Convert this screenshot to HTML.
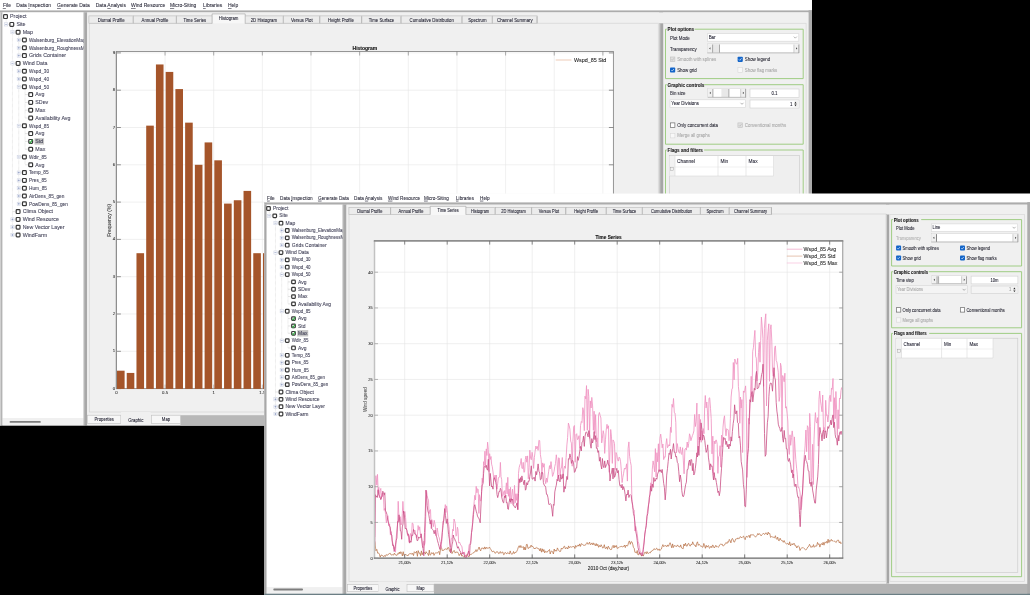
<!DOCTYPE html><html><head><meta charset="utf-8"><style>html,body{margin:0;padding:0;background:#000;width:1030px;height:595px;overflow:hidden}svg{display:block;will-change:transform}text{font-family:"Liberation Sans",sans-serif}</style></head><body>
<svg width="1030" height="595" viewBox="0 0 1030 595">
<rect x="0.00" y="0.00" width="1030.00" height="595.00" fill="#000"/>
<g id="w1">
<rect x="0.00" y="0.00" width="812.00" height="425.50" fill="#f0f0f0"/>
<rect x="0.00" y="0.00" width="812.00" height="10.20" fill="#ffffff"/>
<text x="2.90" y="7.21" font-size="5.3" fill="#2b2b3b" stroke="#2b2b3b" stroke-width="0.08" font-weight="normal" text-anchor="start" textLength="8.06" lengthAdjust="spacingAndGlyphs"><tspan text-decoration="underline">F</tspan>ile</text>
<text x="16.30" y="7.21" font-size="5.3" fill="#2b2b3b" stroke="#2b2b3b" stroke-width="0.08" font-weight="normal" text-anchor="start" textLength="34.74" lengthAdjust="spacingAndGlyphs">Data <tspan text-decoration="underline">I</tspan>nspection</text>
<text x="57.00" y="7.21" font-size="5.3" fill="#2b2b3b" stroke="#2b2b3b" stroke-width="0.08" font-weight="normal" text-anchor="start" textLength="32.80" lengthAdjust="spacingAndGlyphs"><tspan text-decoration="underline">G</tspan>enerate Data</text>
<text x="95.70" y="7.21" font-size="5.3" fill="#2b2b3b" stroke="#2b2b3b" stroke-width="0.08" font-weight="normal" text-anchor="start" textLength="30.29" lengthAdjust="spacingAndGlyphs">Data <tspan text-decoration="underline">A</tspan>nalysis</text>
<text x="131.00" y="7.21" font-size="5.3" fill="#2b2b3b" stroke="#2b2b3b" stroke-width="0.08" font-weight="normal" text-anchor="start" textLength="34.18" lengthAdjust="spacingAndGlyphs"><tspan text-decoration="underline">W</tspan>ind Resource</text>
<text x="170.00" y="7.21" font-size="5.3" fill="#2b2b3b" stroke="#2b2b3b" stroke-width="0.08" font-weight="normal" text-anchor="start" textLength="26.39" lengthAdjust="spacingAndGlyphs"><tspan text-decoration="underline">M</tspan>icro-Siting</text>
<text x="203.00" y="7.21" font-size="5.3" fill="#2b2b3b" stroke="#2b2b3b" stroke-width="0.08" font-weight="normal" text-anchor="start" textLength="19.17" lengthAdjust="spacingAndGlyphs"><tspan text-decoration="underline">L</tspan>ibraries</text>
<text x="228.00" y="7.21" font-size="5.3" fill="#2b2b3b" stroke="#2b2b3b" stroke-width="0.08" font-weight="normal" text-anchor="start" textLength="10.28" lengthAdjust="spacingAndGlyphs"><tspan text-decoration="underline">H</tspan>elp</text>
<rect x="0.00" y="10.20" width="812.00" height="2.20" fill="#acacac"/>
<rect x="0.00" y="10.20" width="812.00" height="0.80" fill="#d4d4d4"/>
<rect x="0.00" y="12.40" width="2.60" height="413.00" fill="#b4b4b4"/>
<rect x="0.00" y="12.40" width="1.00" height="413.00" fill="#d0d0d0"/>
<rect x="2.60" y="12.40" width="81.10" height="405.60" fill="#ffffff"/>
<rect x="2.60" y="418.00" width="81.10" height="7.40" fill="#f0f0f0"/>
<rect x="9.60" y="420.90" width="31.20" height="1.90" fill="#7d7d7d" rx="0.9"/>
<svg x="0" y="0" width="83.7" height="418" overflow="hidden">
<line x1="6.15" y1="19.40" x2="6.15" y2="24.40" stroke="#c4c4c4" stroke-width="0.5" stroke-dasharray="0.6,0.6"/>
<line x1="7.75" y1="24.40" x2="9.00" y2="24.40" stroke="#c8c8c8" stroke-width="0.5"/>
<line x1="12.45" y1="27.20" x2="12.45" y2="235.00" stroke="#c4c4c4" stroke-width="0.5" stroke-dasharray="0.6,0.6"/>
<line x1="14.05" y1="32.20" x2="15.30" y2="32.20" stroke="#c8c8c8" stroke-width="0.5"/>
<line x1="18.75" y1="35.00" x2="18.75" y2="55.60" stroke="#c4c4c4" stroke-width="0.5" stroke-dasharray="0.6,0.6"/>
<line x1="20.35" y1="40.00" x2="21.60" y2="40.00" stroke="#c8c8c8" stroke-width="0.5"/>
<line x1="20.35" y1="47.80" x2="21.60" y2="47.80" stroke="#c8c8c8" stroke-width="0.5"/>
<line x1="20.35" y1="55.60" x2="21.60" y2="55.60" stroke="#c8c8c8" stroke-width="0.5"/>
<line x1="14.05" y1="63.40" x2="15.30" y2="63.40" stroke="#c8c8c8" stroke-width="0.5"/>
<line x1="18.75" y1="66.20" x2="18.75" y2="203.80" stroke="#c4c4c4" stroke-width="0.5" stroke-dasharray="0.6,0.6"/>
<line x1="20.35" y1="71.20" x2="21.60" y2="71.20" stroke="#c8c8c8" stroke-width="0.5"/>
<line x1="20.35" y1="79.00" x2="21.60" y2="79.00" stroke="#c8c8c8" stroke-width="0.5"/>
<line x1="20.35" y1="86.80" x2="21.60" y2="86.80" stroke="#c8c8c8" stroke-width="0.5"/>
<line x1="25.05" y1="89.60" x2="25.05" y2="118.00" stroke="#c4c4c4" stroke-width="0.5" stroke-dasharray="0.6,0.6"/>
<line x1="25.05" y1="94.60" x2="27.90" y2="94.60" stroke="#c8c8c8" stroke-width="0.5"/>
<line x1="25.05" y1="102.40" x2="27.90" y2="102.40" stroke="#c8c8c8" stroke-width="0.5"/>
<line x1="25.05" y1="110.20" x2="27.90" y2="110.20" stroke="#c8c8c8" stroke-width="0.5"/>
<line x1="25.05" y1="118.00" x2="27.90" y2="118.00" stroke="#c8c8c8" stroke-width="0.5"/>
<line x1="20.35" y1="125.80" x2="21.60" y2="125.80" stroke="#c8c8c8" stroke-width="0.5"/>
<line x1="25.05" y1="128.60" x2="25.05" y2="149.20" stroke="#c4c4c4" stroke-width="0.5" stroke-dasharray="0.6,0.6"/>
<line x1="25.05" y1="133.60" x2="27.90" y2="133.60" stroke="#c8c8c8" stroke-width="0.5"/>
<line x1="25.05" y1="141.40" x2="27.90" y2="141.40" stroke="#c8c8c8" stroke-width="0.5"/>
<line x1="25.05" y1="149.20" x2="27.90" y2="149.20" stroke="#c8c8c8" stroke-width="0.5"/>
<line x1="20.35" y1="157.00" x2="21.60" y2="157.00" stroke="#c8c8c8" stroke-width="0.5"/>
<line x1="25.05" y1="159.80" x2="25.05" y2="164.80" stroke="#c4c4c4" stroke-width="0.5" stroke-dasharray="0.6,0.6"/>
<line x1="25.05" y1="164.80" x2="27.90" y2="164.80" stroke="#c8c8c8" stroke-width="0.5"/>
<line x1="20.35" y1="172.60" x2="21.60" y2="172.60" stroke="#c8c8c8" stroke-width="0.5"/>
<line x1="20.35" y1="180.40" x2="21.60" y2="180.40" stroke="#c8c8c8" stroke-width="0.5"/>
<line x1="20.35" y1="188.20" x2="21.60" y2="188.20" stroke="#c8c8c8" stroke-width="0.5"/>
<line x1="20.35" y1="196.00" x2="21.60" y2="196.00" stroke="#c8c8c8" stroke-width="0.5"/>
<line x1="20.35" y1="203.80" x2="21.60" y2="203.80" stroke="#c8c8c8" stroke-width="0.5"/>
<line x1="12.45" y1="211.60" x2="15.30" y2="211.60" stroke="#c8c8c8" stroke-width="0.5"/>
<line x1="14.05" y1="219.40" x2="15.30" y2="219.40" stroke="#c8c8c8" stroke-width="0.5"/>
<line x1="14.05" y1="227.20" x2="15.30" y2="227.20" stroke="#c8c8c8" stroke-width="0.5"/>
<line x1="14.05" y1="235.00" x2="15.30" y2="235.00" stroke="#c8c8c8" stroke-width="0.5"/>
<rect x="3.60" y="14.70" width="3.80" height="3.80" fill="#fff" stroke="#383838" stroke-width="1.2" rx="0.8"/>
<text x="10.10" y="18.31" font-size="4.75" fill="#44445a" stroke="#44445a" stroke-width="0.08" font-weight="normal" text-anchor="start" textLength="16.49" lengthAdjust="spacingAndGlyphs">Project</text>
<rect x="4.55" y="22.80" width="3.20" height="3.20" fill="#fff" stroke="#c9cfe0" stroke-width="0.5"/>
<line x1="5.15" y1="24.40" x2="7.15" y2="24.40" stroke="#6c7fb0" stroke-width="0.5"/>
<rect x="9.90" y="22.50" width="3.80" height="3.80" fill="#fff" stroke="#383838" stroke-width="1.2" rx="0.8"/>
<text x="16.40" y="26.11" font-size="4.75" fill="#44445a" stroke="#44445a" stroke-width="0.08" font-weight="normal" text-anchor="start" textLength="9.13" lengthAdjust="spacingAndGlyphs">Site</text>
<rect x="10.85" y="30.60" width="3.20" height="3.20" fill="#fff" stroke="#c9cfe0" stroke-width="0.5"/>
<line x1="11.45" y1="32.20" x2="13.45" y2="32.20" stroke="#6c7fb0" stroke-width="0.5"/>
<rect x="16.20" y="30.30" width="3.80" height="3.80" fill="#fff" stroke="#383838" stroke-width="1.2" rx="0.8"/>
<text x="22.70" y="33.91" font-size="4.75" fill="#44445a" stroke="#44445a" stroke-width="0.08" font-weight="normal" text-anchor="start" textLength="10.31" lengthAdjust="spacingAndGlyphs">Map</text>
<rect x="17.15" y="38.40" width="3.20" height="3.20" fill="#fff" stroke="#c9cfe0" stroke-width="0.5"/>
<line x1="17.75" y1="40.00" x2="19.75" y2="40.00" stroke="#6c7fb0" stroke-width="0.5"/>
<line x1="18.75" y1="39.00" x2="18.75" y2="41.00" stroke="#6c7fb0" stroke-width="0.5"/>
<rect x="22.50" y="38.10" width="3.80" height="3.80" fill="#fff" stroke="#383838" stroke-width="1.2" rx="0.8"/>
<text x="29.00" y="41.71" font-size="4.75" fill="#44445a" stroke="#44445a" stroke-width="0.08" font-weight="normal" text-anchor="start" textLength="56.59" lengthAdjust="spacingAndGlyphs">Walsenburg_ElevationMap</text>
<rect x="17.15" y="46.20" width="3.20" height="3.20" fill="#fff" stroke="#c9cfe0" stroke-width="0.5"/>
<line x1="17.75" y1="47.80" x2="19.75" y2="47.80" stroke="#6c7fb0" stroke-width="0.5"/>
<line x1="18.75" y1="46.80" x2="18.75" y2="48.80" stroke="#6c7fb0" stroke-width="0.5"/>
<rect x="22.50" y="45.90" width="3.80" height="3.80" fill="#fff" stroke="#383838" stroke-width="1.2" rx="0.8"/>
<text x="29.00" y="49.51" font-size="4.75" fill="#44445a" stroke="#44445a" stroke-width="0.08" font-weight="normal" text-anchor="start" textLength="61.08" lengthAdjust="spacingAndGlyphs">Walsenburg_RoughnessMap</text>
<rect x="17.15" y="54.00" width="3.20" height="3.20" fill="#fff" stroke="#c9cfe0" stroke-width="0.5"/>
<line x1="17.75" y1="55.60" x2="19.75" y2="55.60" stroke="#6c7fb0" stroke-width="0.5"/>
<line x1="18.75" y1="54.60" x2="18.75" y2="56.60" stroke="#6c7fb0" stroke-width="0.5"/>
<rect x="22.50" y="53.70" width="3.80" height="3.80" fill="#fff" stroke="#383838" stroke-width="1.2" rx="0.8"/>
<text x="29.00" y="57.31" font-size="4.75" fill="#44445a" stroke="#44445a" stroke-width="0.08" font-weight="normal" text-anchor="start" textLength="37.11" lengthAdjust="spacingAndGlyphs">Grids Container</text>
<rect x="10.85" y="61.80" width="3.20" height="3.20" fill="#fff" stroke="#c9cfe0" stroke-width="0.5"/>
<line x1="11.45" y1="63.40" x2="13.45" y2="63.40" stroke="#6c7fb0" stroke-width="0.5"/>
<rect x="16.20" y="61.50" width="3.80" height="3.80" fill="#fff" stroke="#383838" stroke-width="1.2" rx="0.8"/>
<text x="22.70" y="65.11" font-size="4.75" fill="#44445a" stroke="#44445a" stroke-width="0.08" font-weight="normal" text-anchor="start" textLength="24.74" lengthAdjust="spacingAndGlyphs">Wind Data</text>
<rect x="17.15" y="69.60" width="3.20" height="3.20" fill="#fff" stroke="#c9cfe0" stroke-width="0.5"/>
<line x1="17.75" y1="71.20" x2="19.75" y2="71.20" stroke="#6c7fb0" stroke-width="0.5"/>
<line x1="18.75" y1="70.20" x2="18.75" y2="72.20" stroke="#6c7fb0" stroke-width="0.5"/>
<rect x="22.50" y="69.30" width="3.80" height="3.80" fill="#fff" stroke="#383838" stroke-width="1.2" rx="0.8"/>
<text x="29.00" y="72.91" font-size="4.75" fill="#44445a" stroke="#44445a" stroke-width="0.08" font-weight="normal" text-anchor="start" textLength="20.07" lengthAdjust="spacingAndGlyphs">Wspd_30</text>
<rect x="17.15" y="77.40" width="3.20" height="3.20" fill="#fff" stroke="#c9cfe0" stroke-width="0.5"/>
<line x1="17.75" y1="79.00" x2="19.75" y2="79.00" stroke="#6c7fb0" stroke-width="0.5"/>
<line x1="18.75" y1="78.00" x2="18.75" y2="80.00" stroke="#6c7fb0" stroke-width="0.5"/>
<rect x="22.50" y="77.10" width="3.80" height="3.80" fill="#fff" stroke="#383838" stroke-width="1.2" rx="0.8"/>
<text x="29.00" y="80.71" font-size="4.75" fill="#44445a" stroke="#44445a" stroke-width="0.08" font-weight="normal" text-anchor="start" textLength="20.07" lengthAdjust="spacingAndGlyphs">Wspd_40</text>
<rect x="17.15" y="85.20" width="3.20" height="3.20" fill="#fff" stroke="#c9cfe0" stroke-width="0.5"/>
<line x1="17.75" y1="86.80" x2="19.75" y2="86.80" stroke="#6c7fb0" stroke-width="0.5"/>
<rect x="22.50" y="84.90" width="3.80" height="3.80" fill="#fff" stroke="#383838" stroke-width="1.2" rx="0.8"/>
<text x="29.00" y="88.51" font-size="4.75" fill="#44445a" stroke="#44445a" stroke-width="0.08" font-weight="normal" text-anchor="start" textLength="20.07" lengthAdjust="spacingAndGlyphs">Wspd_50</text>
<rect x="28.80" y="92.70" width="3.80" height="3.80" fill="#fff" stroke="#383838" stroke-width="1.2" rx="0.8"/>
<text x="35.30" y="96.31" font-size="4.75" fill="#44445a" stroke="#44445a" stroke-width="0.08" font-weight="normal" text-anchor="start" textLength="9.04" lengthAdjust="spacingAndGlyphs">Avg</text>
<rect x="28.80" y="100.50" width="3.80" height="3.80" fill="#fff" stroke="#383838" stroke-width="1.2" rx="0.8"/>
<text x="35.30" y="104.11" font-size="4.75" fill="#44445a" stroke="#44445a" stroke-width="0.08" font-weight="normal" text-anchor="start" textLength="12.96" lengthAdjust="spacingAndGlyphs">SDev</text>
<rect x="28.80" y="108.30" width="3.80" height="3.80" fill="#fff" stroke="#383838" stroke-width="1.2" rx="0.8"/>
<text x="35.30" y="111.91" font-size="4.75" fill="#44445a" stroke="#44445a" stroke-width="0.08" font-weight="normal" text-anchor="start" textLength="10.01" lengthAdjust="spacingAndGlyphs">Max</text>
<rect x="28.80" y="116.10" width="3.80" height="3.80" fill="#fff" stroke="#383838" stroke-width="1.2" rx="0.8"/>
<text x="35.30" y="119.71" font-size="4.75" fill="#44445a" stroke="#44445a" stroke-width="0.08" font-weight="normal" text-anchor="start" textLength="35.16" lengthAdjust="spacingAndGlyphs">Availability Avg</text>
<rect x="17.15" y="124.20" width="3.20" height="3.20" fill="#fff" stroke="#c9cfe0" stroke-width="0.5"/>
<line x1="17.75" y1="125.80" x2="19.75" y2="125.80" stroke="#6c7fb0" stroke-width="0.5"/>
<rect x="22.50" y="123.90" width="3.80" height="3.80" fill="#fff" stroke="#383838" stroke-width="1.2" rx="0.8"/>
<text x="29.00" y="127.51" font-size="4.75" fill="#44445a" stroke="#44445a" stroke-width="0.08" font-weight="normal" text-anchor="start" textLength="20.07" lengthAdjust="spacingAndGlyphs">Wspd_85</text>
<rect x="28.80" y="131.70" width="3.80" height="3.80" fill="#fff" stroke="#383838" stroke-width="1.2" rx="0.8"/>
<text x="35.30" y="135.31" font-size="4.75" fill="#44445a" stroke="#44445a" stroke-width="0.08" font-weight="normal" text-anchor="start" textLength="9.04" lengthAdjust="spacingAndGlyphs">Avg</text>
<rect x="34.50" y="138.20" width="9.55" height="6.40" fill="#c6c6c6"/>
<rect x="28.80" y="139.50" width="3.80" height="3.80" fill="#fff" stroke="#383838" stroke-width="1.2" rx="0.8"/>
<path d="M29.50,141.65 L30.30,142.90 L32.45,139.65" fill="none" stroke="#35a845" stroke-width="1.1"/>
<text x="35.30" y="143.11" font-size="4.75" fill="#44445a" stroke="#44445a" stroke-width="0.08" font-weight="normal" text-anchor="start" textLength="7.95" lengthAdjust="spacingAndGlyphs">Std</text>
<rect x="28.80" y="147.30" width="3.80" height="3.80" fill="#fff" stroke="#383838" stroke-width="1.2" rx="0.8"/>
<text x="35.30" y="150.91" font-size="4.75" fill="#44445a" stroke="#44445a" stroke-width="0.08" font-weight="normal" text-anchor="start" textLength="10.01" lengthAdjust="spacingAndGlyphs">Max</text>
<rect x="17.15" y="155.40" width="3.20" height="3.20" fill="#fff" stroke="#c9cfe0" stroke-width="0.5"/>
<line x1="17.75" y1="157.00" x2="19.75" y2="157.00" stroke="#6c7fb0" stroke-width="0.5"/>
<rect x="22.50" y="155.10" width="3.80" height="3.80" fill="#fff" stroke="#383838" stroke-width="1.2" rx="0.8"/>
<text x="29.00" y="158.71" font-size="4.75" fill="#44445a" stroke="#44445a" stroke-width="0.08" font-weight="normal" text-anchor="start" textLength="17.69" lengthAdjust="spacingAndGlyphs">Wdir_85</text>
<rect x="28.80" y="162.90" width="3.80" height="3.80" fill="#fff" stroke="#383838" stroke-width="1.2" rx="0.8"/>
<text x="35.30" y="166.51" font-size="4.75" fill="#44445a" stroke="#44445a" stroke-width="0.08" font-weight="normal" text-anchor="start" textLength="9.04" lengthAdjust="spacingAndGlyphs">Avg</text>
<rect x="17.15" y="171.00" width="3.20" height="3.20" fill="#fff" stroke="#c9cfe0" stroke-width="0.5"/>
<line x1="17.75" y1="172.60" x2="19.75" y2="172.60" stroke="#6c7fb0" stroke-width="0.5"/>
<line x1="18.75" y1="171.60" x2="18.75" y2="173.60" stroke="#6c7fb0" stroke-width="0.5"/>
<rect x="22.50" y="170.70" width="3.80" height="3.80" fill="#fff" stroke="#383838" stroke-width="1.2" rx="0.8"/>
<text x="29.00" y="174.31" font-size="4.75" fill="#44445a" stroke="#44445a" stroke-width="0.08" font-weight="normal" text-anchor="start" textLength="19.54" lengthAdjust="spacingAndGlyphs">Temp_85</text>
<rect x="17.15" y="178.80" width="3.20" height="3.20" fill="#fff" stroke="#c9cfe0" stroke-width="0.5"/>
<line x1="17.75" y1="180.40" x2="19.75" y2="180.40" stroke="#6c7fb0" stroke-width="0.5"/>
<line x1="18.75" y1="179.40" x2="18.75" y2="181.40" stroke="#6c7fb0" stroke-width="0.5"/>
<rect x="22.50" y="178.50" width="3.80" height="3.80" fill="#fff" stroke="#383838" stroke-width="1.2" rx="0.8"/>
<text x="29.00" y="182.11" font-size="4.75" fill="#44445a" stroke="#44445a" stroke-width="0.08" font-weight="normal" text-anchor="start" textLength="17.69" lengthAdjust="spacingAndGlyphs">Pres_85</text>
<rect x="17.15" y="186.60" width="3.20" height="3.20" fill="#fff" stroke="#c9cfe0" stroke-width="0.5"/>
<line x1="17.75" y1="188.20" x2="19.75" y2="188.20" stroke="#6c7fb0" stroke-width="0.5"/>
<line x1="18.75" y1="187.20" x2="18.75" y2="189.20" stroke="#6c7fb0" stroke-width="0.5"/>
<rect x="22.50" y="186.30" width="3.80" height="3.80" fill="#fff" stroke="#383838" stroke-width="1.2" rx="0.8"/>
<text x="29.00" y="189.91" font-size="4.75" fill="#44445a" stroke="#44445a" stroke-width="0.08" font-weight="normal" text-anchor="start" textLength="17.95" lengthAdjust="spacingAndGlyphs">Hum_85</text>
<rect x="17.15" y="194.40" width="3.20" height="3.20" fill="#fff" stroke="#c9cfe0" stroke-width="0.5"/>
<line x1="17.75" y1="196.00" x2="19.75" y2="196.00" stroke="#6c7fb0" stroke-width="0.5"/>
<line x1="18.75" y1="195.00" x2="18.75" y2="197.00" stroke="#6c7fb0" stroke-width="0.5"/>
<rect x="22.50" y="194.10" width="3.80" height="3.80" fill="#fff" stroke="#383838" stroke-width="1.2" rx="0.8"/>
<text x="29.00" y="197.71" font-size="4.75" fill="#44445a" stroke="#44445a" stroke-width="0.08" font-weight="normal" text-anchor="start" textLength="35.38" lengthAdjust="spacingAndGlyphs">AirDens_85_gen</text>
<rect x="17.15" y="202.20" width="3.20" height="3.20" fill="#fff" stroke="#c9cfe0" stroke-width="0.5"/>
<line x1="17.75" y1="203.80" x2="19.75" y2="203.80" stroke="#6c7fb0" stroke-width="0.5"/>
<line x1="18.75" y1="202.80" x2="18.75" y2="204.80" stroke="#6c7fb0" stroke-width="0.5"/>
<rect x="22.50" y="201.90" width="3.80" height="3.80" fill="#fff" stroke="#383838" stroke-width="1.2" rx="0.8"/>
<text x="29.00" y="205.51" font-size="4.75" fill="#44445a" stroke="#44445a" stroke-width="0.08" font-weight="normal" text-anchor="start" textLength="38.82" lengthAdjust="spacingAndGlyphs">PowDens_85_gen</text>
<rect x="16.20" y="209.70" width="3.80" height="3.80" fill="#fff" stroke="#383838" stroke-width="1.2" rx="0.8"/>
<text x="22.70" y="213.31" font-size="4.75" fill="#44445a" stroke="#44445a" stroke-width="0.08" font-weight="normal" text-anchor="start" textLength="30.33" lengthAdjust="spacingAndGlyphs">Clima Object</text>
<rect x="10.85" y="217.80" width="3.20" height="3.20" fill="#fff" stroke="#c9cfe0" stroke-width="0.5"/>
<line x1="11.45" y1="219.40" x2="13.45" y2="219.40" stroke="#6c7fb0" stroke-width="0.5"/>
<line x1="12.45" y1="218.40" x2="12.45" y2="220.40" stroke="#6c7fb0" stroke-width="0.5"/>
<rect x="16.20" y="217.50" width="3.80" height="3.80" fill="#fff" stroke="#383838" stroke-width="1.2" rx="0.8"/>
<text x="22.70" y="221.11" font-size="4.75" fill="#44445a" stroke="#44445a" stroke-width="0.08" font-weight="normal" text-anchor="start" textLength="36.23" lengthAdjust="spacingAndGlyphs">Wind Resource</text>
<rect x="10.85" y="225.60" width="3.20" height="3.20" fill="#fff" stroke="#c9cfe0" stroke-width="0.5"/>
<line x1="11.45" y1="227.20" x2="13.45" y2="227.20" stroke="#6c7fb0" stroke-width="0.5"/>
<line x1="12.45" y1="226.20" x2="12.45" y2="228.20" stroke="#6c7fb0" stroke-width="0.5"/>
<rect x="16.20" y="225.30" width="3.80" height="3.80" fill="#fff" stroke="#383838" stroke-width="1.2" rx="0.8"/>
<text x="22.70" y="228.91" font-size="4.75" fill="#44445a" stroke="#44445a" stroke-width="0.08" font-weight="normal" text-anchor="start" textLength="41.83" lengthAdjust="spacingAndGlyphs">New Vector Layer</text>
<rect x="10.85" y="233.40" width="3.20" height="3.20" fill="#fff" stroke="#c9cfe0" stroke-width="0.5"/>
<line x1="11.45" y1="235.00" x2="13.45" y2="235.00" stroke="#6c7fb0" stroke-width="0.5"/>
<line x1="12.45" y1="234.00" x2="12.45" y2="236.00" stroke="#6c7fb0" stroke-width="0.5"/>
<rect x="16.20" y="233.10" width="3.80" height="3.80" fill="#fff" stroke="#383838" stroke-width="1.2" rx="0.8"/>
<text x="22.70" y="236.71" font-size="4.75" fill="#44445a" stroke="#44445a" stroke-width="0.08" font-weight="normal" text-anchor="start" textLength="24.44" lengthAdjust="spacingAndGlyphs">WindFarm</text>
</svg>
<rect x="83.70" y="12.40" width="3.50" height="413.00" fill="#a8a8a8"/>
<rect x="83.70" y="12.40" width="0.80" height="413.00" fill="#c4c4c4"/>
<rect x="87.20" y="12.40" width="571.90" height="413.00" fill="#f0f0f0"/>
<rect x="89.30" y="23.20" width="569.00" height="388.80" fill="#f0f0f0" stroke="#d4d4d4" stroke-width="0.7"/>
<rect x="88.90" y="15.90" width="44.50" height="7.30" fill="#ececec" stroke="#b9b9b9" stroke-width="0.6"/>
<line x1="133.10" y1="16.40" x2="133.10" y2="23.20" stroke="#9a9a9a" stroke-width="0.5"/>
<text x="111.15" y="21.83" font-size="4.816" fill="#1e1e2e" stroke="#1e1e2e" stroke-width="0.08" font-weight="normal" text-anchor="middle" textLength="27.00" lengthAdjust="spacingAndGlyphs">Diurnal Profile</text>
<rect x="133.40" y="15.90" width="43.20" height="7.30" fill="#ececec" stroke="#b9b9b9" stroke-width="0.6"/>
<line x1="176.30" y1="16.40" x2="176.30" y2="23.20" stroke="#9a9a9a" stroke-width="0.5"/>
<text x="155.00" y="21.83" font-size="4.816" fill="#1e1e2e" stroke="#1e1e2e" stroke-width="0.08" font-weight="normal" text-anchor="middle" textLength="26.77" lengthAdjust="spacingAndGlyphs">Annual Profile</text>
<rect x="176.60" y="15.90" width="36.50" height="7.30" fill="#ececec" stroke="#b9b9b9" stroke-width="0.6"/>
<line x1="212.80" y1="16.40" x2="212.80" y2="23.20" stroke="#9a9a9a" stroke-width="0.5"/>
<text x="194.85" y="21.83" font-size="4.816" fill="#1e1e2e" stroke="#1e1e2e" stroke-width="0.08" font-weight="normal" text-anchor="middle" textLength="22.78" lengthAdjust="spacingAndGlyphs">Time Series</text>
<rect x="244.20" y="15.90" width="39.30" height="7.30" fill="#ececec" stroke="#b9b9b9" stroke-width="0.6"/>
<line x1="283.20" y1="16.40" x2="283.20" y2="23.20" stroke="#9a9a9a" stroke-width="0.5"/>
<text x="263.85" y="21.83" font-size="4.816" fill="#1e1e2e" stroke="#1e1e2e" stroke-width="0.08" font-weight="normal" text-anchor="middle" textLength="26.28" lengthAdjust="spacingAndGlyphs">2D Histogram</text>
<rect x="283.50" y="15.90" width="36.50" height="7.30" fill="#ececec" stroke="#b9b9b9" stroke-width="0.6"/>
<line x1="319.70" y1="16.40" x2="319.70" y2="23.20" stroke="#9a9a9a" stroke-width="0.5"/>
<text x="301.75" y="21.83" font-size="4.816" fill="#1e1e2e" stroke="#1e1e2e" stroke-width="0.08" font-weight="normal" text-anchor="middle" textLength="21.75" lengthAdjust="spacingAndGlyphs">Versus Plot</text>
<rect x="320.00" y="15.90" width="41.90" height="7.30" fill="#ececec" stroke="#b9b9b9" stroke-width="0.6"/>
<line x1="361.60" y1="16.40" x2="361.60" y2="23.20" stroke="#9a9a9a" stroke-width="0.5"/>
<text x="340.95" y="21.83" font-size="4.816" fill="#1e1e2e" stroke="#1e1e2e" stroke-width="0.08" font-weight="normal" text-anchor="middle" textLength="25.81" lengthAdjust="spacingAndGlyphs">Height Profile</text>
<rect x="361.90" y="15.90" width="39.30" height="7.30" fill="#ececec" stroke="#b9b9b9" stroke-width="0.6"/>
<line x1="400.90" y1="16.40" x2="400.90" y2="23.20" stroke="#9a9a9a" stroke-width="0.5"/>
<text x="381.55" y="21.83" font-size="4.816" fill="#1e1e2e" stroke="#1e1e2e" stroke-width="0.08" font-weight="normal" text-anchor="middle" textLength="25.41" lengthAdjust="spacingAndGlyphs">Time Surface</text>
<rect x="401.20" y="15.90" width="61.00" height="7.30" fill="#ececec" stroke="#b9b9b9" stroke-width="0.6"/>
<line x1="461.90" y1="16.40" x2="461.90" y2="23.20" stroke="#9a9a9a" stroke-width="0.5"/>
<text x="431.70" y="21.83" font-size="4.816" fill="#1e1e2e" stroke="#1e1e2e" stroke-width="0.08" font-weight="normal" text-anchor="middle" textLength="44.21" lengthAdjust="spacingAndGlyphs">Cumulative Distribution</text>
<rect x="462.20" y="15.90" width="30.30" height="7.30" fill="#ececec" stroke="#b9b9b9" stroke-width="0.6"/>
<line x1="492.20" y1="16.40" x2="492.20" y2="23.20" stroke="#9a9a9a" stroke-width="0.5"/>
<text x="477.35" y="21.83" font-size="4.816" fill="#1e1e2e" stroke="#1e1e2e" stroke-width="0.08" font-weight="normal" text-anchor="middle" textLength="18.40" lengthAdjust="spacingAndGlyphs">Spectrum</text>
<rect x="492.50" y="15.90" width="44.70" height="7.30" fill="#ececec" stroke="#b9b9b9" stroke-width="0.6"/>
<line x1="536.90" y1="16.40" x2="536.90" y2="23.20" stroke="#9a9a9a" stroke-width="0.5"/>
<text x="514.85" y="21.83" font-size="4.816" fill="#1e1e2e" stroke="#1e1e2e" stroke-width="0.08" font-weight="normal" text-anchor="middle" textLength="35.61" lengthAdjust="spacingAndGlyphs">Channel Summary</text>
<rect x="212.10" y="13.90" width="33.10" height="9.90" fill="#f7f7f7"/>
<path d="M212.10,23.50 L212.10,13.90 L245.20,13.90 L245.20,23.50" fill="none" stroke="#a0a0a0" stroke-width="0.6"/>
<text x="228.65" y="20.23" font-size="4.816" fill="#1e1e2e" stroke="#1e1e2e" stroke-width="0.08" font-weight="normal" text-anchor="middle" textLength="19.59" lengthAdjust="spacingAndGlyphs">Histogram</text>
<rect x="180.40" y="415.20" width="478.00" height="10.20" fill="#b8b8b8"/>
<rect x="87.60" y="415.20" width="33.20" height="8.10" fill="#f7f7f7" stroke="#c0c0c0" stroke-width="0.6"/>
<text x="104.20" y="421.08" font-size="4.944999999999999" fill="#1c1c2c" stroke="#1c1c2c" stroke-width="0.08" font-weight="normal" text-anchor="middle" textLength="19.60" lengthAdjust="spacingAndGlyphs">Properties</text>
<rect x="121.00" y="412.00" width="29.60" height="12.50" fill="#f0f0f0"/>
<text x="135.80" y="422.38" font-size="4.944999999999999" fill="#1c1c2c" stroke="#1c1c2c" stroke-width="0.08" font-weight="normal" text-anchor="middle" textLength="15.06" lengthAdjust="spacingAndGlyphs">Graphic</text>
<rect x="151.60" y="415.20" width="28.80" height="8.10" fill="#f7f7f7" stroke="#c0c0c0" stroke-width="0.6"/>
<text x="166.00" y="421.08" font-size="4.944999999999999" fill="#1c1c2c" stroke="#1c1c2c" stroke-width="0.08" font-weight="normal" text-anchor="middle" textLength="8.36" lengthAdjust="spacingAndGlyphs">Map</text>
<rect x="659.10" y="23.30" width="4.00" height="402.00" fill="#a6a6a6"/>
<rect x="659.10" y="23.30" width="1.20" height="402.00" fill="#cfcfcf"/>
<rect x="663.10" y="12.40" width="145.50" height="413.00" fill="#f0f0f0"/>
<rect x="663.60" y="23.30" width="142.50" height="402.00" fill="#f0f0f0" stroke="#d8d8d8" stroke-width="0.7"/>
<rect x="808.60" y="10.20" width="3.40" height="415.30" fill="#acacac"/>
<rect x="116.40" y="51.50" width="497.00" height="337.10" fill="#ffffff"/>
<line x1="116.40" y1="351.30" x2="613.40" y2="351.30" stroke="#e6e6e6" stroke-width="0.6"/>
<line x1="116.40" y1="314.00" x2="613.40" y2="314.00" stroke="#e6e6e6" stroke-width="0.6"/>
<line x1="116.40" y1="276.70" x2="613.40" y2="276.70" stroke="#e6e6e6" stroke-width="0.6"/>
<line x1="116.40" y1="239.40" x2="613.40" y2="239.40" stroke="#e6e6e6" stroke-width="0.6"/>
<line x1="116.40" y1="202.10" x2="613.40" y2="202.10" stroke="#e6e6e6" stroke-width="0.6"/>
<line x1="116.40" y1="164.80" x2="613.40" y2="164.80" stroke="#e6e6e6" stroke-width="0.6"/>
<line x1="116.40" y1="127.50" x2="613.40" y2="127.50" stroke="#e6e6e6" stroke-width="0.6"/>
<line x1="116.40" y1="90.20" x2="613.40" y2="90.20" stroke="#e6e6e6" stroke-width="0.6"/>
<line x1="116.40" y1="52.90" x2="613.40" y2="52.90" stroke="#e6e6e6" stroke-width="0.6"/>
<line x1="165.05" y1="51.50" x2="165.05" y2="388.60" stroke="#e6e6e6" stroke-width="0.6"/>
<line x1="213.70" y1="51.50" x2="213.70" y2="388.60" stroke="#e6e6e6" stroke-width="0.6"/>
<line x1="262.35" y1="51.50" x2="262.35" y2="388.60" stroke="#e6e6e6" stroke-width="0.6"/>
<line x1="311.00" y1="51.50" x2="311.00" y2="388.60" stroke="#e6e6e6" stroke-width="0.6"/>
<line x1="359.65" y1="51.50" x2="359.65" y2="388.60" stroke="#e6e6e6" stroke-width="0.6"/>
<line x1="408.30" y1="51.50" x2="408.30" y2="388.60" stroke="#e6e6e6" stroke-width="0.6"/>
<line x1="456.95" y1="51.50" x2="456.95" y2="388.60" stroke="#e6e6e6" stroke-width="0.6"/>
<line x1="505.60" y1="51.50" x2="505.60" y2="388.60" stroke="#e6e6e6" stroke-width="0.6"/>
<line x1="554.25" y1="51.50" x2="554.25" y2="388.60" stroke="#e6e6e6" stroke-width="0.6"/>
<line x1="602.90" y1="51.50" x2="602.90" y2="388.60" stroke="#e6e6e6" stroke-width="0.6"/>
<rect x="116.4" y="51.5" width="497.0" height="337.1" fill="none" stroke="#8a8a8a" stroke-width="0.9"/>
<line x1="116.40" y1="388.60" x2="120.90" y2="388.60" stroke="#666" stroke-width="0.7"/>
<line x1="608.90" y1="388.60" x2="613.40" y2="388.60" stroke="#666" stroke-width="0.7"/>
<line x1="116.40" y1="351.30" x2="120.90" y2="351.30" stroke="#666" stroke-width="0.7"/>
<line x1="608.90" y1="351.30" x2="613.40" y2="351.30" stroke="#666" stroke-width="0.7"/>
<line x1="116.40" y1="314.00" x2="120.90" y2="314.00" stroke="#666" stroke-width="0.7"/>
<line x1="608.90" y1="314.00" x2="613.40" y2="314.00" stroke="#666" stroke-width="0.7"/>
<line x1="116.40" y1="276.70" x2="120.90" y2="276.70" stroke="#666" stroke-width="0.7"/>
<line x1="608.90" y1="276.70" x2="613.40" y2="276.70" stroke="#666" stroke-width="0.7"/>
<line x1="116.40" y1="239.40" x2="120.90" y2="239.40" stroke="#666" stroke-width="0.7"/>
<line x1="608.90" y1="239.40" x2="613.40" y2="239.40" stroke="#666" stroke-width="0.7"/>
<line x1="116.40" y1="202.10" x2="120.90" y2="202.10" stroke="#666" stroke-width="0.7"/>
<line x1="608.90" y1="202.10" x2="613.40" y2="202.10" stroke="#666" stroke-width="0.7"/>
<line x1="116.40" y1="164.80" x2="120.90" y2="164.80" stroke="#666" stroke-width="0.7"/>
<line x1="608.90" y1="164.80" x2="613.40" y2="164.80" stroke="#666" stroke-width="0.7"/>
<line x1="116.40" y1="127.50" x2="120.90" y2="127.50" stroke="#666" stroke-width="0.7"/>
<line x1="608.90" y1="127.50" x2="613.40" y2="127.50" stroke="#666" stroke-width="0.7"/>
<line x1="116.40" y1="90.20" x2="120.90" y2="90.20" stroke="#666" stroke-width="0.7"/>
<line x1="608.90" y1="90.20" x2="613.40" y2="90.20" stroke="#666" stroke-width="0.7"/>
<line x1="116.40" y1="52.90" x2="120.90" y2="52.90" stroke="#666" stroke-width="0.7"/>
<line x1="608.90" y1="52.90" x2="613.40" y2="52.90" stroke="#666" stroke-width="0.7"/>
<line x1="116.40" y1="388.60" x2="116.40" y2="384.60" stroke="#9a9a9a" stroke-width="0.6"/>
<line x1="116.40" y1="51.50" x2="116.40" y2="55.50" stroke="#777" stroke-width="0.6"/>
<line x1="165.05" y1="388.60" x2="165.05" y2="384.60" stroke="#9a9a9a" stroke-width="0.6"/>
<line x1="165.05" y1="51.50" x2="165.05" y2="55.50" stroke="#777" stroke-width="0.6"/>
<line x1="213.70" y1="388.60" x2="213.70" y2="384.60" stroke="#9a9a9a" stroke-width="0.6"/>
<line x1="213.70" y1="51.50" x2="213.70" y2="55.50" stroke="#777" stroke-width="0.6"/>
<line x1="262.35" y1="388.60" x2="262.35" y2="384.60" stroke="#9a9a9a" stroke-width="0.6"/>
<line x1="262.35" y1="51.50" x2="262.35" y2="55.50" stroke="#777" stroke-width="0.6"/>
<line x1="311.00" y1="388.60" x2="311.00" y2="384.60" stroke="#9a9a9a" stroke-width="0.6"/>
<line x1="311.00" y1="51.50" x2="311.00" y2="55.50" stroke="#777" stroke-width="0.6"/>
<line x1="359.65" y1="388.60" x2="359.65" y2="384.60" stroke="#9a9a9a" stroke-width="0.6"/>
<line x1="359.65" y1="51.50" x2="359.65" y2="55.50" stroke="#777" stroke-width="0.6"/>
<line x1="408.30" y1="388.60" x2="408.30" y2="384.60" stroke="#9a9a9a" stroke-width="0.6"/>
<line x1="408.30" y1="51.50" x2="408.30" y2="55.50" stroke="#777" stroke-width="0.6"/>
<line x1="456.95" y1="388.60" x2="456.95" y2="384.60" stroke="#9a9a9a" stroke-width="0.6"/>
<line x1="456.95" y1="51.50" x2="456.95" y2="55.50" stroke="#777" stroke-width="0.6"/>
<line x1="505.60" y1="388.60" x2="505.60" y2="384.60" stroke="#9a9a9a" stroke-width="0.6"/>
<line x1="505.60" y1="51.50" x2="505.60" y2="55.50" stroke="#777" stroke-width="0.6"/>
<line x1="554.25" y1="388.60" x2="554.25" y2="384.60" stroke="#9a9a9a" stroke-width="0.6"/>
<line x1="554.25" y1="51.50" x2="554.25" y2="55.50" stroke="#777" stroke-width="0.6"/>
<line x1="602.90" y1="388.60" x2="602.90" y2="384.60" stroke="#9a9a9a" stroke-width="0.6"/>
<line x1="602.90" y1="51.50" x2="602.90" y2="55.50" stroke="#777" stroke-width="0.6"/>
<rect x="117.00" y="370.70" width="7.60" height="18.20" fill="#a5552a"/>
<rect x="126.73" y="372.93" width="7.60" height="15.97" fill="#a5552a"/>
<rect x="136.47" y="253.20" width="7.60" height="135.70" fill="#a5552a"/>
<rect x="146.20" y="125.64" width="7.60" height="263.26" fill="#a5552a"/>
<rect x="155.93" y="64.46" width="7.60" height="324.44" fill="#a5552a"/>
<rect x="165.67" y="71.92" width="7.60" height="316.98" fill="#a5552a"/>
<rect x="175.40" y="89.08" width="7.60" height="299.82" fill="#a5552a"/>
<rect x="185.13" y="122.65" width="7.60" height="266.25" fill="#a5552a"/>
<rect x="194.86" y="164.80" width="7.60" height="224.10" fill="#a5552a"/>
<rect x="204.60" y="142.42" width="7.60" height="246.48" fill="#a5552a"/>
<rect x="214.33" y="160.32" width="7.60" height="228.58" fill="#a5552a"/>
<rect x="224.06" y="203.59" width="7.60" height="185.31" fill="#a5552a"/>
<rect x="233.80" y="200.24" width="7.60" height="188.66" fill="#a5552a"/>
<rect x="243.53" y="190.91" width="7.60" height="197.99" fill="#a5552a"/>
<rect x="253.26" y="253.20" width="7.60" height="135.70" fill="#a5552a"/>
<rect x="263.00" y="253.20" width="7.60" height="135.70" fill="#a5552a"/>
<rect x="272.73" y="269.24" width="7.60" height="119.66" fill="#a5552a"/>
<rect x="282.46" y="284.16" width="7.60" height="104.74" fill="#a5552a"/>
<rect x="292.19" y="302.81" width="7.60" height="86.09" fill="#a5552a"/>
<rect x="301.93" y="314.00" width="7.60" height="74.90" fill="#a5552a"/>
<line x1="116.40" y1="51.50" x2="116.40" y2="388.60" stroke="#8e8e8e" stroke-width="1.2"/>
<text x="115.20" y="389.65" font-size="4.3" fill="#333" stroke="#333" stroke-width="0.08" font-weight="normal" text-anchor="end">0</text>
<text x="115.20" y="352.35" font-size="4.3" fill="#333" stroke="#333" stroke-width="0.08" font-weight="normal" text-anchor="end">1</text>
<text x="115.20" y="315.05" font-size="4.3" fill="#333" stroke="#333" stroke-width="0.08" font-weight="normal" text-anchor="end">2</text>
<text x="115.20" y="277.75" font-size="4.3" fill="#333" stroke="#333" stroke-width="0.08" font-weight="normal" text-anchor="end">3</text>
<text x="115.20" y="240.45" font-size="4.3" fill="#333" stroke="#333" stroke-width="0.08" font-weight="normal" text-anchor="end">4</text>
<text x="115.20" y="203.15" font-size="4.3" fill="#333" stroke="#333" stroke-width="0.08" font-weight="normal" text-anchor="end">5</text>
<text x="115.20" y="165.85" font-size="4.3" fill="#333" stroke="#333" stroke-width="0.08" font-weight="normal" text-anchor="end">6</text>
<text x="115.20" y="128.55" font-size="4.3" fill="#333" stroke="#333" stroke-width="0.08" font-weight="normal" text-anchor="end">7</text>
<text x="115.20" y="91.25" font-size="4.3" fill="#333" stroke="#333" stroke-width="0.08" font-weight="normal" text-anchor="end">8</text>
<text x="115.20" y="53.95" font-size="4.3" fill="#333" stroke="#333" stroke-width="0.08" font-weight="normal" text-anchor="end">9</text>
<text x="116.40" y="394.45" font-size="4.3" fill="#333" stroke="#333" stroke-width="0.08" font-weight="normal" text-anchor="middle">0</text>
<text x="165.05" y="394.45" font-size="4.3" fill="#333" stroke="#333" stroke-width="0.08" font-weight="normal" text-anchor="middle">0.5</text>
<text x="213.70" y="394.45" font-size="4.3" fill="#333" stroke="#333" stroke-width="0.08" font-weight="normal" text-anchor="middle">1</text>
<text x="262.35" y="394.45" font-size="4.3" fill="#333" stroke="#333" stroke-width="0.08" font-weight="normal" text-anchor="middle">1.5</text>
<text x="311.00" y="394.45" font-size="4.3" fill="#333" stroke="#333" stroke-width="0.08" font-weight="normal" text-anchor="middle">2</text>
<text x="359.65" y="394.45" font-size="4.3" fill="#333" stroke="#333" stroke-width="0.08" font-weight="normal" text-anchor="middle">2.5</text>
<text x="408.30" y="394.45" font-size="4.3" fill="#333" stroke="#333" stroke-width="0.08" font-weight="normal" text-anchor="middle">3</text>
<text x="456.95" y="394.45" font-size="4.3" fill="#333" stroke="#333" stroke-width="0.08" font-weight="normal" text-anchor="middle">3.5</text>
<text x="505.60" y="394.45" font-size="4.3" fill="#333" stroke="#333" stroke-width="0.08" font-weight="normal" text-anchor="middle">4</text>
<text x="554.25" y="394.45" font-size="4.3" fill="#333" stroke="#333" stroke-width="0.08" font-weight="normal" text-anchor="middle">4.5</text>
<text x="602.90" y="394.45" font-size="4.3" fill="#333" stroke="#333" stroke-width="0.08" font-weight="normal" text-anchor="middle">5</text>
<text x="364.90" y="49.80" font-size="5.0" fill="#111" stroke="#111" stroke-width="0.1" font-weight="bold" text-anchor="middle">Histogram</text>
<text x="0" y="0" font-size="5" fill="#333" stroke="#333" stroke-width="0.08" text-anchor="middle" transform="translate(111.3,220.4) rotate(-90)">Frequency (%)</text>
<line x1="555.70" y1="60.00" x2="571.40" y2="60.00" stroke="#e0a888" stroke-width="0.6"/>
<text x="574.00" y="62.14" font-size="5.4" fill="#222" stroke="#222" stroke-width="0.08" font-weight="normal" text-anchor="start">Wspd_85 Std</text>
<path d="M694.60,29.20 L803.20,29.20 L803.20,78.60 L665.50,78.60 L665.50,29.20 L666.80,29.20" fill="none" stroke="#96c878" stroke-width="0.9"/>
<text x="667.60" y="31.22" font-size="5.06" fill="#1a1a1a" stroke="#1a1a1a" stroke-width="0.1" font-weight="bold" text-anchor="start" textLength="26.57" lengthAdjust="spacingAndGlyphs">Plot options</text>
<text x="670.00" y="39.64" font-size="4.840000000000001" fill="#2a2a36" stroke="#2a2a36" stroke-width="0.08" font-weight="normal" text-anchor="start" textLength="19.81" lengthAdjust="spacingAndGlyphs">Plot Mode</text>
<rect x="707.50" y="33.70" width="91.30" height="7.50" fill="#ffffff" stroke="#d6d6d6" stroke-width="0.6"/>
<text x="708.70" y="39.19" font-size="4.840000000000001" fill="#1c1c2c" stroke="#1c1c2c" stroke-width="0.08" font-weight="normal" text-anchor="start" textLength="6.85" lengthAdjust="spacingAndGlyphs">Bar</text>
<path d="M793.80,36.65 L795.30,38.15 L796.80,36.65" fill="none" stroke="#777" stroke-width="0.55"/>
<text x="670.00" y="50.74" font-size="4.840000000000001" fill="#2a2a36" stroke="#2a2a36" stroke-width="0.08" font-weight="normal" text-anchor="start" textLength="26.74" lengthAdjust="spacingAndGlyphs">Transparency</text>
<rect x="707.50" y="43.90" width="91.50" height="9.10" fill="#ffffff" stroke="#cfcfcf" stroke-width="0.5"/>
<rect x="707.80" y="44.20" width="4.80" height="8.50" fill="#f0f0f0"/>
<rect x="793.90" y="44.20" width="4.80" height="8.50" fill="#f0f0f0"/>
<rect x="712.60" y="44.20" width="6.90" height="8.50" fill="#e8e8e8"/>
<path d="M709.20,48.45 L710.40,47.35 L710.40,49.55Z" fill="#333"/>
<path d="M797.30,48.45 L796.10,47.35 L796.10,49.55Z" fill="#333"/>
<line x1="712.60" y1="44.50" x2="712.60" y2="52.70" stroke="#6a6a6a" stroke-width="0.55"/>
<line x1="719.50" y1="44.50" x2="719.50" y2="52.70" stroke="#6a6a6a" stroke-width="0.55"/>
<line x1="793.90" y1="44.50" x2="793.90" y2="52.70" stroke="#9a9a9a" stroke-width="0.45"/>
<line x1="798.80" y1="44.50" x2="798.80" y2="53.00" stroke="#6a6a6a" stroke-width="0.55"/>
<line x1="707.50" y1="52.80" x2="799.00" y2="52.80" stroke="#9a9a9a" stroke-width="0.5"/>
<rect x="670.30" y="57.00" width="4.60" height="4.60" fill="#e0e0e0" stroke="#c0c0c0" stroke-width="0.6"/>
<path d="M671.30,59.40 L672.24,60.34 L673.95,58.26" stroke="#b0b0b0" stroke-width="0.6" fill="none"/>
<text x="677.20" y="61.04" font-size="4.840000000000001" fill="#a9a9a9" stroke="#a9a9a9" stroke-width="0.08" font-weight="normal" text-anchor="start" textLength="39.13" lengthAdjust="spacingAndGlyphs">Smooth with splines</text>
<rect x="737.60" y="56.70" width="5.20" height="5.20" fill="#1264c8" rx="0.8"/>
<path d="M738.90,59.40 L739.84,60.34 L741.55,58.26" stroke="#fff" stroke-width="0.6" fill="none"/>
<text x="744.80" y="61.04" font-size="4.840000000000001" fill="#2a2a36" stroke="#2a2a36" stroke-width="0.08" font-weight="normal" text-anchor="start" textLength="25.44" lengthAdjust="spacingAndGlyphs">Show legend</text>
<rect x="670.00" y="67.40" width="5.20" height="5.20" fill="#1264c8" rx="0.8"/>
<path d="M671.30,70.10 L672.24,71.04 L673.95,68.96" stroke="#fff" stroke-width="0.6" fill="none"/>
<text x="677.20" y="71.74" font-size="4.840000000000001" fill="#2a2a36" stroke="#2a2a36" stroke-width="0.08" font-weight="normal" text-anchor="start" textLength="19.56" lengthAdjust="spacingAndGlyphs">Show grid</text>
<rect x="737.90" y="67.70" width="4.60" height="4.60" fill="#f8f8f8" stroke="#d8d8d8" stroke-width="0.6"/>
<text x="744.80" y="71.74" font-size="4.840000000000001" fill="#a9a9a9" stroke="#a9a9a9" stroke-width="0.08" font-weight="normal" text-anchor="start" textLength="32.52" lengthAdjust="spacingAndGlyphs">Show flag marks</text>
<path d="M704.10,84.70 L803.20,84.70 L803.20,144.20 L665.50,144.20 L665.50,84.70 L666.80,84.70" fill="none" stroke="#96c878" stroke-width="0.9"/>
<text x="667.60" y="86.72" font-size="5.06" fill="#1a1a1a" stroke="#1a1a1a" stroke-width="0.1" font-weight="bold" text-anchor="start" textLength="36.80" lengthAdjust="spacingAndGlyphs">Graphic controls</text>
<text x="670.00" y="95.14" font-size="4.840000000000001" fill="#2a2a36" stroke="#2a2a36" stroke-width="0.08" font-weight="normal" text-anchor="start" textLength="15.41" lengthAdjust="spacingAndGlyphs">Bin size</text>
<rect x="707.80" y="88.40" width="38.00" height="9.10" fill="#ffffff" stroke="#cfcfcf" stroke-width="0.5"/>
<rect x="708.10" y="88.70" width="4.80" height="8.50" fill="#f0f0f0"/>
<rect x="740.70" y="88.70" width="4.80" height="8.50" fill="#f0f0f0"/>
<rect x="721.40" y="88.70" width="7.50" height="8.50" fill="#e8e8e8"/>
<path d="M709.50,92.95 L710.70,91.85 L710.70,94.05Z" fill="#333"/>
<path d="M744.10,92.95 L742.90,91.85 L742.90,94.05Z" fill="#333"/>
<line x1="712.90" y1="89.00" x2="712.90" y2="97.20" stroke="#6a6a6a" stroke-width="0.55"/>
<line x1="728.90" y1="89.00" x2="728.90" y2="97.20" stroke="#6a6a6a" stroke-width="0.55"/>
<line x1="740.70" y1="89.00" x2="740.70" y2="97.20" stroke="#9a9a9a" stroke-width="0.45"/>
<line x1="745.60" y1="89.00" x2="745.60" y2="97.50" stroke="#6a6a6a" stroke-width="0.55"/>
<line x1="707.80" y1="97.30" x2="745.80" y2="97.30" stroke="#9a9a9a" stroke-width="0.5"/>
<rect x="750.00" y="89.00" width="49.00" height="8.60" fill="#ffffff" stroke="#d0d0d0" stroke-width="0.6"/>
<text x="774.50" y="95.04" font-size="4.840000000000001" fill="#1c1c2c" stroke="#1c1c2c" stroke-width="0.08" font-weight="normal" text-anchor="middle" textLength="6.12" lengthAdjust="spacingAndGlyphs">0.1</text>
<rect x="670.00" y="99.80" width="75.50" height="7.60" fill="#ffffff" stroke="#d6d6d6" stroke-width="0.6"/>
<text x="671.20" y="105.34" font-size="4.840000000000001" fill="#1c1c2c" stroke="#1c1c2c" stroke-width="0.08" font-weight="normal" text-anchor="start" textLength="27.72" lengthAdjust="spacingAndGlyphs">Year Divisions</text>
<path d="M740.50,102.80 L742.00,104.30 L743.50,102.80" fill="none" stroke="#777" stroke-width="0.55"/>
<rect x="750.00" y="100.00" width="49.00" height="8.00" fill="#ffffff" stroke="#d0d0d0" stroke-width="0.6"/>
<text x="792.50" y="105.74" font-size="4.840000000000001" fill="#1c1c2c" stroke="#1c1c2c" stroke-width="0.08" font-weight="normal" text-anchor="end" textLength="2.45" lengthAdjust="spacingAndGlyphs">1</text>
<rect x="794.40" y="100.40" width="4.20" height="7.20" fill="#f0f0f0"/>
<path d="M794.40,103.40 L795.50,101.80 L796.60,103.40Z M794.40,104.60 L795.50,106.20 L796.60,104.60Z" fill="#222"/>
<rect x="670.30" y="122.90" width="4.60" height="4.60" fill="#ffffff" stroke="#555" stroke-width="0.6"/>
<text x="677.20" y="126.94" font-size="4.840000000000001" fill="#2a2a36" stroke="#2a2a36" stroke-width="0.08" font-weight="normal" text-anchor="start" textLength="40.84" lengthAdjust="spacingAndGlyphs">Only concurrent data</text>
<rect x="737.90" y="122.90" width="4.60" height="4.60" fill="#e0e0e0" stroke="#c0c0c0" stroke-width="0.6"/>
<path d="M738.90,125.30 L739.84,126.24 L741.55,124.16" stroke="#b0b0b0" stroke-width="0.6" fill="none"/>
<text x="744.80" y="126.94" font-size="4.840000000000001" fill="#a9a9a9" stroke="#a9a9a9" stroke-width="0.08" font-weight="normal" text-anchor="start" textLength="41.33" lengthAdjust="spacingAndGlyphs">Conventional months</text>
<rect x="670.30" y="133.30" width="4.60" height="4.60" fill="#f8f8f8" stroke="#d8d8d8" stroke-width="0.6"/>
<text x="677.20" y="137.34" font-size="4.840000000000001" fill="#a9a9a9" stroke="#a9a9a9" stroke-width="0.08" font-weight="normal" text-anchor="start" textLength="32.77" lengthAdjust="spacingAndGlyphs">Merge all graphs</text>
<path d="M704.10,150.00 L803.20,150.00 L803.20,240.00 L665.50,240.00 L665.50,150.00 L666.80,150.00" fill="none" stroke="#96c878" stroke-width="0.9"/>
<text x="667.60" y="152.02" font-size="5.06" fill="#1a1a1a" stroke="#1a1a1a" stroke-width="0.1" font-weight="bold" text-anchor="start" textLength="35.27" lengthAdjust="spacingAndGlyphs">Flags and filters</text>
<rect x="669.30" y="155.50" width="130.30" height="80.00" fill="#efefef" stroke="#c8c8c8" stroke-width="0.6"/>
<rect x="669.80" y="156.00" width="104.00" height="20.00" fill="#ffffff"/>
<rect x="669.80" y="156.00" width="5.20" height="20.00" fill="#f2f2f2"/>
<line x1="675.00" y1="156.00" x2="675.00" y2="176.00" stroke="#d0d0d0" stroke-width="0.5"/>
<line x1="718.00" y1="156.00" x2="718.00" y2="176.00" stroke="#d0d0d0" stroke-width="0.5"/>
<line x1="746.00" y1="156.00" x2="746.00" y2="176.00" stroke="#d0d0d0" stroke-width="0.5"/>
<line x1="773.50" y1="156.00" x2="773.50" y2="176.00" stroke="#d0d0d0" stroke-width="0.5"/>
<line x1="669.80" y1="167.00" x2="773.50" y2="167.00" stroke="#e0e0e0" stroke-width="0.5"/>
<line x1="669.80" y1="176.00" x2="773.50" y2="176.00" stroke="#d0d0d0" stroke-width="0.5"/>
<text x="677.00" y="163.37" font-size="5.2" fill="#1c1c2c" stroke="#1c1c2c" stroke-width="0.08" font-weight="normal" text-anchor="start" textLength="17.88" lengthAdjust="spacingAndGlyphs">Channel</text>
<text x="720.50" y="163.37" font-size="5.2" fill="#1c1c2c" stroke="#1c1c2c" stroke-width="0.08" font-weight="normal" text-anchor="start" textLength="7.73" lengthAdjust="spacingAndGlyphs">Min</text>
<text x="748.50" y="163.37" font-size="5.2" fill="#1c1c2c" stroke="#1c1c2c" stroke-width="0.08" font-weight="normal" text-anchor="start" textLength="9.07" lengthAdjust="spacingAndGlyphs">Max</text>
<rect x="670.50" y="167.50" width="3.00" height="3.00" fill="none" stroke="#999" stroke-width="0.4"/>
</g>
<g id="w2">
<rect x="264.30" y="193.70" width="765.70" height="401.30" fill="#f0f0f0"/>
<rect x="264.30" y="193.70" width="765.70" height="8.40" fill="#ffffff"/>
<text x="267.00" y="199.80" font-size="5.0" fill="#2b2b3b" stroke="#2b2b3b" stroke-width="0.08" font-weight="normal" text-anchor="start" textLength="7.57" lengthAdjust="spacingAndGlyphs"><tspan text-decoration="underline">F</tspan>ile</text>
<text x="280.00" y="199.80" font-size="5.0" fill="#2b2b3b" stroke="#2b2b3b" stroke-width="0.08" font-weight="normal" text-anchor="start" textLength="32.66" lengthAdjust="spacingAndGlyphs">Data <tspan text-decoration="underline">I</tspan>nspection</text>
<text x="318.00" y="199.80" font-size="5.0" fill="#2b2b3b" stroke="#2b2b3b" stroke-width="0.08" font-weight="normal" text-anchor="start" textLength="30.83" lengthAdjust="spacingAndGlyphs"><tspan text-decoration="underline">G</tspan>enerate Data</text>
<text x="354.00" y="199.80" font-size="5.0" fill="#2b2b3b" stroke="#2b2b3b" stroke-width="0.08" font-weight="normal" text-anchor="start" textLength="28.47" lengthAdjust="spacingAndGlyphs">Data <tspan text-decoration="underline">A</tspan>nalysis</text>
<text x="388.00" y="199.80" font-size="5.0" fill="#2b2b3b" stroke="#2b2b3b" stroke-width="0.08" font-weight="normal" text-anchor="start" textLength="32.13" lengthAdjust="spacingAndGlyphs"><tspan text-decoration="underline">W</tspan>ind Resource</text>
<text x="424.00" y="199.80" font-size="5.0" fill="#2b2b3b" stroke="#2b2b3b" stroke-width="0.08" font-weight="normal" text-anchor="start" textLength="24.81" lengthAdjust="spacingAndGlyphs"><tspan text-decoration="underline">M</tspan>icro-Siting</text>
<text x="456.00" y="199.80" font-size="5.0" fill="#2b2b3b" stroke="#2b2b3b" stroke-width="0.08" font-weight="normal" text-anchor="start" textLength="18.02" lengthAdjust="spacingAndGlyphs"><tspan text-decoration="underline">L</tspan>ibraries</text>
<text x="480.00" y="199.80" font-size="5.0" fill="#2b2b3b" stroke="#2b2b3b" stroke-width="0.08" font-weight="normal" text-anchor="start" textLength="9.67" lengthAdjust="spacingAndGlyphs"><tspan text-decoration="underline">H</tspan>elp</text>
<rect x="264.30" y="202.10" width="765.70" height="2.60" fill="#acacac"/>
<rect x="264.30" y="202.10" width="765.70" height="0.80" fill="#d4d4d4"/>
<rect x="264.30" y="204.70" width="2.40" height="390.00" fill="#a8a8a8"/>
<rect x="266.70" y="204.70" width="76.00" height="382.60" fill="#ffffff"/>
<rect x="266.70" y="587.30" width="76.00" height="6.60" fill="#f0f0f0"/>
<rect x="273.30" y="588.60" width="29.70" height="1.80" fill="#7d7d7d" rx="0.9"/>
<svg x="0" y="0" width="342.7" height="587" overflow="hidden">
<line x1="269.23" y1="211.20" x2="269.23" y2="215.84" stroke="#c4c4c4" stroke-width="0.5" stroke-dasharray="0.6,0.6"/>
<line x1="270.83" y1="215.84" x2="272.05" y2="215.84" stroke="#c8c8c8" stroke-width="0.5"/>
<line x1="275.48" y1="218.54" x2="275.48" y2="414.02" stroke="#c4c4c4" stroke-width="0.5" stroke-dasharray="0.6,0.6"/>
<line x1="277.08" y1="223.18" x2="278.30" y2="223.18" stroke="#c8c8c8" stroke-width="0.5"/>
<line x1="281.73" y1="225.88" x2="281.73" y2="245.20" stroke="#c4c4c4" stroke-width="0.5" stroke-dasharray="0.6,0.6"/>
<line x1="283.33" y1="230.52" x2="284.55" y2="230.52" stroke="#c8c8c8" stroke-width="0.5"/>
<line x1="283.33" y1="237.86" x2="284.55" y2="237.86" stroke="#c8c8c8" stroke-width="0.5"/>
<line x1="283.33" y1="245.20" x2="284.55" y2="245.20" stroke="#c8c8c8" stroke-width="0.5"/>
<line x1="277.08" y1="252.54" x2="278.30" y2="252.54" stroke="#c8c8c8" stroke-width="0.5"/>
<line x1="281.73" y1="255.24" x2="281.73" y2="384.66" stroke="#c4c4c4" stroke-width="0.5" stroke-dasharray="0.6,0.6"/>
<line x1="283.33" y1="259.88" x2="284.55" y2="259.88" stroke="#c8c8c8" stroke-width="0.5"/>
<line x1="283.33" y1="267.22" x2="284.55" y2="267.22" stroke="#c8c8c8" stroke-width="0.5"/>
<line x1="283.33" y1="274.56" x2="284.55" y2="274.56" stroke="#c8c8c8" stroke-width="0.5"/>
<line x1="287.98" y1="277.26" x2="287.98" y2="303.92" stroke="#c4c4c4" stroke-width="0.5" stroke-dasharray="0.6,0.6"/>
<line x1="287.98" y1="281.90" x2="290.80" y2="281.90" stroke="#c8c8c8" stroke-width="0.5"/>
<line x1="287.98" y1="289.24" x2="290.80" y2="289.24" stroke="#c8c8c8" stroke-width="0.5"/>
<line x1="287.98" y1="296.58" x2="290.80" y2="296.58" stroke="#c8c8c8" stroke-width="0.5"/>
<line x1="287.98" y1="303.92" x2="290.80" y2="303.92" stroke="#c8c8c8" stroke-width="0.5"/>
<line x1="283.33" y1="311.26" x2="284.55" y2="311.26" stroke="#c8c8c8" stroke-width="0.5"/>
<line x1="287.98" y1="313.96" x2="287.98" y2="333.28" stroke="#c4c4c4" stroke-width="0.5" stroke-dasharray="0.6,0.6"/>
<line x1="287.98" y1="318.60" x2="290.80" y2="318.60" stroke="#c8c8c8" stroke-width="0.5"/>
<line x1="287.98" y1="325.94" x2="290.80" y2="325.94" stroke="#c8c8c8" stroke-width="0.5"/>
<line x1="287.98" y1="333.28" x2="290.80" y2="333.28" stroke="#c8c8c8" stroke-width="0.5"/>
<line x1="283.33" y1="340.62" x2="284.55" y2="340.62" stroke="#c8c8c8" stroke-width="0.5"/>
<line x1="287.98" y1="343.32" x2="287.98" y2="347.96" stroke="#c4c4c4" stroke-width="0.5" stroke-dasharray="0.6,0.6"/>
<line x1="287.98" y1="347.96" x2="290.80" y2="347.96" stroke="#c8c8c8" stroke-width="0.5"/>
<line x1="283.33" y1="355.30" x2="284.55" y2="355.30" stroke="#c8c8c8" stroke-width="0.5"/>
<line x1="283.33" y1="362.64" x2="284.55" y2="362.64" stroke="#c8c8c8" stroke-width="0.5"/>
<line x1="283.33" y1="369.98" x2="284.55" y2="369.98" stroke="#c8c8c8" stroke-width="0.5"/>
<line x1="283.33" y1="377.32" x2="284.55" y2="377.32" stroke="#c8c8c8" stroke-width="0.5"/>
<line x1="283.33" y1="384.66" x2="284.55" y2="384.66" stroke="#c8c8c8" stroke-width="0.5"/>
<line x1="275.48" y1="392.00" x2="278.30" y2="392.00" stroke="#c8c8c8" stroke-width="0.5"/>
<line x1="277.08" y1="399.34" x2="278.30" y2="399.34" stroke="#c8c8c8" stroke-width="0.5"/>
<line x1="277.08" y1="406.68" x2="278.30" y2="406.68" stroke="#c8c8c8" stroke-width="0.5"/>
<line x1="277.08" y1="414.02" x2="278.30" y2="414.02" stroke="#c8c8c8" stroke-width="0.5"/>
<rect x="266.70" y="206.70" width="3.60" height="3.60" fill="#fff" stroke="#383838" stroke-width="1.2" rx="0.8"/>
<text x="273.00" y="210.11" font-size="4.465" fill="#44445a" stroke="#44445a" stroke-width="0.08" font-weight="normal" text-anchor="start" textLength="15.50" lengthAdjust="spacingAndGlyphs">Project</text>
<rect x="267.62" y="214.24" width="3.20" height="3.20" fill="#fff" stroke="#c9cfe0" stroke-width="0.5"/>
<line x1="268.23" y1="215.84" x2="270.23" y2="215.84" stroke="#6c7fb0" stroke-width="0.5"/>
<rect x="272.95" y="214.04" width="3.60" height="3.60" fill="#fff" stroke="#383838" stroke-width="1.2" rx="0.8"/>
<text x="279.25" y="217.45" font-size="4.465" fill="#44445a" stroke="#44445a" stroke-width="0.08" font-weight="normal" text-anchor="start" textLength="8.58" lengthAdjust="spacingAndGlyphs">Site</text>
<rect x="273.88" y="221.58" width="3.20" height="3.20" fill="#fff" stroke="#c9cfe0" stroke-width="0.5"/>
<line x1="274.48" y1="223.18" x2="276.48" y2="223.18" stroke="#6c7fb0" stroke-width="0.5"/>
<rect x="279.20" y="221.38" width="3.60" height="3.60" fill="#fff" stroke="#383838" stroke-width="1.2" rx="0.8"/>
<text x="285.50" y="224.79" font-size="4.465" fill="#44445a" stroke="#44445a" stroke-width="0.08" font-weight="normal" text-anchor="start" textLength="9.69" lengthAdjust="spacingAndGlyphs">Map</text>
<rect x="280.12" y="228.92" width="3.20" height="3.20" fill="#fff" stroke="#c9cfe0" stroke-width="0.5"/>
<line x1="280.73" y1="230.52" x2="282.73" y2="230.52" stroke="#6c7fb0" stroke-width="0.5"/>
<line x1="281.73" y1="229.52" x2="281.73" y2="231.52" stroke="#6c7fb0" stroke-width="0.5"/>
<rect x="285.45" y="228.72" width="3.60" height="3.60" fill="#fff" stroke="#383838" stroke-width="1.2" rx="0.8"/>
<text x="291.75" y="232.13" font-size="4.465" fill="#44445a" stroke="#44445a" stroke-width="0.08" font-weight="normal" text-anchor="start" textLength="53.19" lengthAdjust="spacingAndGlyphs">Walsenburg_ElevationMap</text>
<rect x="280.12" y="236.26" width="3.20" height="3.20" fill="#fff" stroke="#c9cfe0" stroke-width="0.5"/>
<line x1="280.73" y1="237.86" x2="282.73" y2="237.86" stroke="#6c7fb0" stroke-width="0.5"/>
<line x1="281.73" y1="236.86" x2="281.73" y2="238.86" stroke="#6c7fb0" stroke-width="0.5"/>
<rect x="285.45" y="236.06" width="3.60" height="3.60" fill="#fff" stroke="#383838" stroke-width="1.2" rx="0.8"/>
<text x="291.75" y="239.47" font-size="4.465" fill="#44445a" stroke="#44445a" stroke-width="0.08" font-weight="normal" text-anchor="start" textLength="57.41" lengthAdjust="spacingAndGlyphs">Walsenburg_RoughnessMap</text>
<rect x="280.12" y="243.60" width="3.20" height="3.20" fill="#fff" stroke="#c9cfe0" stroke-width="0.5"/>
<line x1="280.73" y1="245.20" x2="282.73" y2="245.20" stroke="#6c7fb0" stroke-width="0.5"/>
<line x1="281.73" y1="244.20" x2="281.73" y2="246.20" stroke="#6c7fb0" stroke-width="0.5"/>
<rect x="285.45" y="243.40" width="3.60" height="3.60" fill="#fff" stroke="#383838" stroke-width="1.2" rx="0.8"/>
<text x="291.75" y="246.81" font-size="4.465" fill="#44445a" stroke="#44445a" stroke-width="0.08" font-weight="normal" text-anchor="start" textLength="34.89" lengthAdjust="spacingAndGlyphs">Grids Container</text>
<rect x="273.88" y="250.94" width="3.20" height="3.20" fill="#fff" stroke="#c9cfe0" stroke-width="0.5"/>
<line x1="274.48" y1="252.54" x2="276.48" y2="252.54" stroke="#6c7fb0" stroke-width="0.5"/>
<rect x="279.20" y="250.74" width="3.60" height="3.60" fill="#fff" stroke="#383838" stroke-width="1.2" rx="0.8"/>
<text x="285.50" y="254.15" font-size="4.465" fill="#44445a" stroke="#44445a" stroke-width="0.08" font-weight="normal" text-anchor="start" textLength="23.26" lengthAdjust="spacingAndGlyphs">Wind Data</text>
<rect x="280.12" y="258.28" width="3.20" height="3.20" fill="#fff" stroke="#c9cfe0" stroke-width="0.5"/>
<line x1="280.73" y1="259.88" x2="282.73" y2="259.88" stroke="#6c7fb0" stroke-width="0.5"/>
<line x1="281.73" y1="258.88" x2="281.73" y2="260.88" stroke="#6c7fb0" stroke-width="0.5"/>
<rect x="285.45" y="258.08" width="3.60" height="3.60" fill="#fff" stroke="#383838" stroke-width="1.2" rx="0.8"/>
<text x="291.75" y="261.49" font-size="4.465" fill="#44445a" stroke="#44445a" stroke-width="0.08" font-weight="normal" text-anchor="start" textLength="18.86" lengthAdjust="spacingAndGlyphs">Wspd_30</text>
<rect x="280.12" y="265.62" width="3.20" height="3.20" fill="#fff" stroke="#c9cfe0" stroke-width="0.5"/>
<line x1="280.73" y1="267.22" x2="282.73" y2="267.22" stroke="#6c7fb0" stroke-width="0.5"/>
<line x1="281.73" y1="266.22" x2="281.73" y2="268.22" stroke="#6c7fb0" stroke-width="0.5"/>
<rect x="285.45" y="265.42" width="3.60" height="3.60" fill="#fff" stroke="#383838" stroke-width="1.2" rx="0.8"/>
<text x="291.75" y="268.83" font-size="4.465" fill="#44445a" stroke="#44445a" stroke-width="0.08" font-weight="normal" text-anchor="start" textLength="18.86" lengthAdjust="spacingAndGlyphs">Wspd_40</text>
<rect x="280.12" y="272.96" width="3.20" height="3.20" fill="#fff" stroke="#c9cfe0" stroke-width="0.5"/>
<line x1="280.73" y1="274.56" x2="282.73" y2="274.56" stroke="#6c7fb0" stroke-width="0.5"/>
<rect x="285.45" y="272.76" width="3.60" height="3.60" fill="#fff" stroke="#383838" stroke-width="1.2" rx="0.8"/>
<text x="291.75" y="276.17" font-size="4.465" fill="#44445a" stroke="#44445a" stroke-width="0.08" font-weight="normal" text-anchor="start" textLength="18.86" lengthAdjust="spacingAndGlyphs">Wspd_50</text>
<rect x="291.70" y="280.10" width="3.60" height="3.60" fill="#fff" stroke="#383838" stroke-width="1.2" rx="0.8"/>
<text x="298.00" y="283.51" font-size="4.465" fill="#44445a" stroke="#44445a" stroke-width="0.08" font-weight="normal" text-anchor="start" textLength="8.49" lengthAdjust="spacingAndGlyphs">Avg</text>
<rect x="291.70" y="287.44" width="3.60" height="3.60" fill="#fff" stroke="#383838" stroke-width="1.2" rx="0.8"/>
<text x="298.00" y="290.85" font-size="4.465" fill="#44445a" stroke="#44445a" stroke-width="0.08" font-weight="normal" text-anchor="start" textLength="12.18" lengthAdjust="spacingAndGlyphs">SDev</text>
<rect x="291.70" y="294.78" width="3.60" height="3.60" fill="#fff" stroke="#383838" stroke-width="1.2" rx="0.8"/>
<text x="298.00" y="298.19" font-size="4.465" fill="#44445a" stroke="#44445a" stroke-width="0.08" font-weight="normal" text-anchor="start" textLength="9.41" lengthAdjust="spacingAndGlyphs">Max</text>
<rect x="291.70" y="302.12" width="3.60" height="3.60" fill="#fff" stroke="#383838" stroke-width="1.2" rx="0.8"/>
<text x="298.00" y="305.53" font-size="4.465" fill="#44445a" stroke="#44445a" stroke-width="0.08" font-weight="normal" text-anchor="start" textLength="33.05" lengthAdjust="spacingAndGlyphs">Availability Avg</text>
<rect x="280.12" y="309.66" width="3.20" height="3.20" fill="#fff" stroke="#c9cfe0" stroke-width="0.5"/>
<line x1="280.73" y1="311.26" x2="282.73" y2="311.26" stroke="#6c7fb0" stroke-width="0.5"/>
<rect x="285.45" y="309.46" width="3.60" height="3.60" fill="#fff" stroke="#383838" stroke-width="1.2" rx="0.8"/>
<text x="291.75" y="312.87" font-size="4.465" fill="#44445a" stroke="#44445a" stroke-width="0.08" font-weight="normal" text-anchor="start" textLength="18.86" lengthAdjust="spacingAndGlyphs">Wspd_85</text>
<rect x="291.70" y="316.80" width="3.60" height="3.60" fill="#fff" stroke="#383838" stroke-width="1.2" rx="0.8"/>
<path d="M292.40,318.84 L293.12,320.04 L295.18,316.92" fill="none" stroke="#35a845" stroke-width="1.1"/>
<text x="298.00" y="320.21" font-size="4.465" fill="#44445a" stroke="#44445a" stroke-width="0.08" font-weight="normal" text-anchor="start" textLength="8.49" lengthAdjust="spacingAndGlyphs">Avg</text>
<rect x="291.70" y="324.14" width="3.60" height="3.60" fill="#fff" stroke="#383838" stroke-width="1.2" rx="0.8"/>
<path d="M292.40,326.18 L293.12,327.38 L295.18,324.26" fill="none" stroke="#35a845" stroke-width="1.1"/>
<text x="298.00" y="327.55" font-size="4.465" fill="#44445a" stroke="#44445a" stroke-width="0.08" font-weight="normal" text-anchor="start" textLength="7.48" lengthAdjust="spacingAndGlyphs">Std</text>
<rect x="297.20" y="330.08" width="11.01" height="6.40" fill="#c6c6c6"/>
<rect x="291.70" y="331.48" width="3.60" height="3.60" fill="#fff" stroke="#383838" stroke-width="1.2" rx="0.8"/>
<path d="M292.40,333.52 L293.12,334.72 L295.18,331.60" fill="none" stroke="#35a845" stroke-width="1.1"/>
<text x="298.00" y="334.89" font-size="4.465" fill="#44445a" stroke="#44445a" stroke-width="0.08" font-weight="normal" text-anchor="start" textLength="9.41" lengthAdjust="spacingAndGlyphs">Max</text>
<rect x="280.12" y="339.02" width="3.20" height="3.20" fill="#fff" stroke="#c9cfe0" stroke-width="0.5"/>
<line x1="280.73" y1="340.62" x2="282.73" y2="340.62" stroke="#6c7fb0" stroke-width="0.5"/>
<rect x="285.45" y="338.82" width="3.60" height="3.60" fill="#fff" stroke="#383838" stroke-width="1.2" rx="0.8"/>
<text x="291.75" y="342.23" font-size="4.465" fill="#44445a" stroke="#44445a" stroke-width="0.08" font-weight="normal" text-anchor="start" textLength="16.63" lengthAdjust="spacingAndGlyphs">Wdir_85</text>
<rect x="291.70" y="346.16" width="3.60" height="3.60" fill="#fff" stroke="#383838" stroke-width="1.2" rx="0.8"/>
<text x="298.00" y="349.57" font-size="4.465" fill="#44445a" stroke="#44445a" stroke-width="0.08" font-weight="normal" text-anchor="start" textLength="8.49" lengthAdjust="spacingAndGlyphs">Avg</text>
<rect x="280.12" y="353.70" width="3.20" height="3.20" fill="#fff" stroke="#c9cfe0" stroke-width="0.5"/>
<line x1="280.73" y1="355.30" x2="282.73" y2="355.30" stroke="#6c7fb0" stroke-width="0.5"/>
<line x1="281.73" y1="354.30" x2="281.73" y2="356.30" stroke="#6c7fb0" stroke-width="0.5"/>
<rect x="285.45" y="353.50" width="3.60" height="3.60" fill="#fff" stroke="#383838" stroke-width="1.2" rx="0.8"/>
<text x="291.75" y="356.91" font-size="4.465" fill="#44445a" stroke="#44445a" stroke-width="0.08" font-weight="normal" text-anchor="start" textLength="18.37" lengthAdjust="spacingAndGlyphs">Temp_85</text>
<rect x="280.12" y="361.04" width="3.20" height="3.20" fill="#fff" stroke="#c9cfe0" stroke-width="0.5"/>
<line x1="280.73" y1="362.64" x2="282.73" y2="362.64" stroke="#6c7fb0" stroke-width="0.5"/>
<line x1="281.73" y1="361.64" x2="281.73" y2="363.64" stroke="#6c7fb0" stroke-width="0.5"/>
<rect x="285.45" y="360.84" width="3.60" height="3.60" fill="#fff" stroke="#383838" stroke-width="1.2" rx="0.8"/>
<text x="291.75" y="364.25" font-size="4.465" fill="#44445a" stroke="#44445a" stroke-width="0.08" font-weight="normal" text-anchor="start" textLength="16.63" lengthAdjust="spacingAndGlyphs">Pres_85</text>
<rect x="280.12" y="368.38" width="3.20" height="3.20" fill="#fff" stroke="#c9cfe0" stroke-width="0.5"/>
<line x1="280.73" y1="369.98" x2="282.73" y2="369.98" stroke="#6c7fb0" stroke-width="0.5"/>
<line x1="281.73" y1="368.98" x2="281.73" y2="370.98" stroke="#6c7fb0" stroke-width="0.5"/>
<rect x="285.45" y="368.18" width="3.60" height="3.60" fill="#fff" stroke="#383838" stroke-width="1.2" rx="0.8"/>
<text x="291.75" y="371.59" font-size="4.465" fill="#44445a" stroke="#44445a" stroke-width="0.08" font-weight="normal" text-anchor="start" textLength="16.88" lengthAdjust="spacingAndGlyphs">Hum_85</text>
<rect x="280.12" y="375.72" width="3.20" height="3.20" fill="#fff" stroke="#c9cfe0" stroke-width="0.5"/>
<line x1="280.73" y1="377.32" x2="282.73" y2="377.32" stroke="#6c7fb0" stroke-width="0.5"/>
<line x1="281.73" y1="376.32" x2="281.73" y2="378.32" stroke="#6c7fb0" stroke-width="0.5"/>
<rect x="285.45" y="375.52" width="3.60" height="3.60" fill="#fff" stroke="#383838" stroke-width="1.2" rx="0.8"/>
<text x="291.75" y="378.93" font-size="4.465" fill="#44445a" stroke="#44445a" stroke-width="0.08" font-weight="normal" text-anchor="start" textLength="33.26" lengthAdjust="spacingAndGlyphs">AirDens_85_gen</text>
<rect x="280.12" y="383.06" width="3.20" height="3.20" fill="#fff" stroke="#c9cfe0" stroke-width="0.5"/>
<line x1="280.73" y1="384.66" x2="282.73" y2="384.66" stroke="#6c7fb0" stroke-width="0.5"/>
<line x1="281.73" y1="383.66" x2="281.73" y2="385.66" stroke="#6c7fb0" stroke-width="0.5"/>
<rect x="285.45" y="382.86" width="3.60" height="3.60" fill="#fff" stroke="#383838" stroke-width="1.2" rx="0.8"/>
<text x="291.75" y="386.27" font-size="4.465" fill="#44445a" stroke="#44445a" stroke-width="0.08" font-weight="normal" text-anchor="start" textLength="36.49" lengthAdjust="spacingAndGlyphs">PowDens_85_gen</text>
<rect x="279.20" y="390.20" width="3.60" height="3.60" fill="#fff" stroke="#383838" stroke-width="1.2" rx="0.8"/>
<text x="285.50" y="393.61" font-size="4.465" fill="#44445a" stroke="#44445a" stroke-width="0.08" font-weight="normal" text-anchor="start" textLength="28.51" lengthAdjust="spacingAndGlyphs">Clima Object</text>
<rect x="273.88" y="397.74" width="3.20" height="3.20" fill="#fff" stroke="#c9cfe0" stroke-width="0.5"/>
<line x1="274.48" y1="399.34" x2="276.48" y2="399.34" stroke="#6c7fb0" stroke-width="0.5"/>
<line x1="275.48" y1="398.34" x2="275.48" y2="400.34" stroke="#6c7fb0" stroke-width="0.5"/>
<rect x="279.20" y="397.54" width="3.60" height="3.60" fill="#fff" stroke="#383838" stroke-width="1.2" rx="0.8"/>
<text x="285.50" y="400.95" font-size="4.465" fill="#44445a" stroke="#44445a" stroke-width="0.08" font-weight="normal" text-anchor="start" textLength="34.06" lengthAdjust="spacingAndGlyphs">Wind Resource</text>
<rect x="273.88" y="405.08" width="3.20" height="3.20" fill="#fff" stroke="#c9cfe0" stroke-width="0.5"/>
<line x1="274.48" y1="406.68" x2="276.48" y2="406.68" stroke="#6c7fb0" stroke-width="0.5"/>
<line x1="275.48" y1="405.68" x2="275.48" y2="407.68" stroke="#6c7fb0" stroke-width="0.5"/>
<rect x="279.20" y="404.88" width="3.60" height="3.60" fill="#fff" stroke="#383838" stroke-width="1.2" rx="0.8"/>
<text x="285.50" y="408.29" font-size="4.465" fill="#44445a" stroke="#44445a" stroke-width="0.08" font-weight="normal" text-anchor="start" textLength="39.32" lengthAdjust="spacingAndGlyphs">New Vector Layer</text>
<rect x="273.88" y="412.42" width="3.20" height="3.20" fill="#fff" stroke="#c9cfe0" stroke-width="0.5"/>
<line x1="274.48" y1="414.02" x2="276.48" y2="414.02" stroke="#6c7fb0" stroke-width="0.5"/>
<line x1="275.48" y1="413.02" x2="275.48" y2="415.02" stroke="#6c7fb0" stroke-width="0.5"/>
<rect x="279.20" y="412.22" width="3.60" height="3.60" fill="#fff" stroke="#383838" stroke-width="1.2" rx="0.8"/>
<text x="285.50" y="415.63" font-size="4.465" fill="#44445a" stroke="#44445a" stroke-width="0.08" font-weight="normal" text-anchor="start" textLength="22.97" lengthAdjust="spacingAndGlyphs">WindFarm</text>
</svg>
<rect x="342.70" y="204.70" width="3.80" height="390.00" fill="#a8a8a8"/>
<rect x="342.70" y="204.70" width="0.80" height="390.00" fill="#c4c4c4"/>
<rect x="346.50" y="204.70" width="539.50" height="390.00" fill="#f0f0f0"/>
<rect x="349.00" y="214.00" width="537.00" height="367.50" fill="#f0f0f0" stroke="#d4d4d4" stroke-width="0.7"/>
<rect x="348.90" y="207.40" width="41.90" height="7.00" fill="#ececec" stroke="#b9b9b9" stroke-width="0.6"/>
<line x1="390.50" y1="207.90" x2="390.50" y2="214.40" stroke="#9a9a9a" stroke-width="0.5"/>
<text x="369.85" y="213.21" font-size="4.48" fill="#1e1e2e" stroke="#1e1e2e" stroke-width="0.08" font-weight="normal" text-anchor="middle" textLength="25.12" lengthAdjust="spacingAndGlyphs">Diurnal Profile</text>
<rect x="390.80" y="207.40" width="40.40" height="7.00" fill="#ececec" stroke="#b9b9b9" stroke-width="0.6"/>
<line x1="430.90" y1="207.90" x2="430.90" y2="214.40" stroke="#9a9a9a" stroke-width="0.5"/>
<text x="411.00" y="213.21" font-size="4.48" fill="#1e1e2e" stroke="#1e1e2e" stroke-width="0.08" font-weight="normal" text-anchor="middle" textLength="24.90" lengthAdjust="spacingAndGlyphs">Annual Profile</text>
<rect x="464.90" y="207.40" width="30.40" height="7.00" fill="#ececec" stroke="#b9b9b9" stroke-width="0.6"/>
<line x1="495.00" y1="207.90" x2="495.00" y2="214.40" stroke="#9a9a9a" stroke-width="0.5"/>
<text x="480.10" y="213.21" font-size="4.48" fill="#1e1e2e" stroke="#1e1e2e" stroke-width="0.08" font-weight="normal" text-anchor="middle" textLength="18.23" lengthAdjust="spacingAndGlyphs">Histogram</text>
<rect x="495.30" y="207.40" width="36.50" height="7.00" fill="#ececec" stroke="#b9b9b9" stroke-width="0.6"/>
<line x1="531.50" y1="207.90" x2="531.50" y2="214.40" stroke="#9a9a9a" stroke-width="0.5"/>
<text x="513.55" y="213.21" font-size="4.48" fill="#1e1e2e" stroke="#1e1e2e" stroke-width="0.08" font-weight="normal" text-anchor="middle" textLength="24.45" lengthAdjust="spacingAndGlyphs">2D Histogram</text>
<rect x="531.80" y="207.40" width="34.20" height="7.00" fill="#ececec" stroke="#b9b9b9" stroke-width="0.6"/>
<line x1="565.70" y1="207.90" x2="565.70" y2="214.40" stroke="#9a9a9a" stroke-width="0.5"/>
<text x="548.90" y="213.21" font-size="4.48" fill="#1e1e2e" stroke="#1e1e2e" stroke-width="0.08" font-weight="normal" text-anchor="middle" textLength="20.23" lengthAdjust="spacingAndGlyphs">Versus Plot</text>
<rect x="566.00" y="207.40" width="40.40" height="7.00" fill="#ececec" stroke="#b9b9b9" stroke-width="0.6"/>
<line x1="606.10" y1="207.90" x2="606.10" y2="214.40" stroke="#9a9a9a" stroke-width="0.5"/>
<text x="586.20" y="213.21" font-size="4.48" fill="#1e1e2e" stroke="#1e1e2e" stroke-width="0.08" font-weight="normal" text-anchor="middle" textLength="24.01" lengthAdjust="spacingAndGlyphs">Height Profile</text>
<rect x="606.40" y="207.40" width="36.10" height="7.00" fill="#ececec" stroke="#b9b9b9" stroke-width="0.6"/>
<line x1="642.20" y1="207.90" x2="642.20" y2="214.40" stroke="#9a9a9a" stroke-width="0.5"/>
<text x="624.45" y="213.21" font-size="4.48" fill="#1e1e2e" stroke="#1e1e2e" stroke-width="0.08" font-weight="normal" text-anchor="middle" textLength="23.64" lengthAdjust="spacingAndGlyphs">Time Surface</text>
<rect x="642.50" y="207.40" width="58.10" height="7.00" fill="#ececec" stroke="#b9b9b9" stroke-width="0.6"/>
<line x1="700.30" y1="207.90" x2="700.30" y2="214.40" stroke="#9a9a9a" stroke-width="0.5"/>
<text x="671.55" y="213.21" font-size="4.48" fill="#1e1e2e" stroke="#1e1e2e" stroke-width="0.08" font-weight="normal" text-anchor="middle" textLength="41.12" lengthAdjust="spacingAndGlyphs">Cumulative Distribution</text>
<rect x="700.60" y="207.40" width="28.70" height="7.00" fill="#ececec" stroke="#b9b9b9" stroke-width="0.6"/>
<line x1="729.00" y1="207.90" x2="729.00" y2="214.40" stroke="#9a9a9a" stroke-width="0.5"/>
<text x="714.95" y="213.21" font-size="4.48" fill="#1e1e2e" stroke="#1e1e2e" stroke-width="0.08" font-weight="normal" text-anchor="middle" textLength="17.12" lengthAdjust="spacingAndGlyphs">Spectrum</text>
<rect x="729.30" y="207.40" width="42.40" height="7.00" fill="#ececec" stroke="#b9b9b9" stroke-width="0.6"/>
<line x1="771.40" y1="207.90" x2="771.40" y2="214.40" stroke="#9a9a9a" stroke-width="0.5"/>
<text x="750.50" y="213.21" font-size="4.48" fill="#1e1e2e" stroke="#1e1e2e" stroke-width="0.08" font-weight="normal" text-anchor="middle" textLength="33.12" lengthAdjust="spacingAndGlyphs">Channel Summary</text>
<rect x="430.20" y="206.30" width="35.70" height="8.70" fill="#f7f7f7"/>
<path d="M430.20,214.70 L430.20,206.30 L465.90,206.30 L465.90,214.70" fill="none" stroke="#a0a0a0" stroke-width="0.6"/>
<text x="448.05" y="212.11" font-size="4.48" fill="#1e1e2e" stroke="#1e1e2e" stroke-width="0.08" font-weight="normal" text-anchor="middle" textLength="21.19" lengthAdjust="spacingAndGlyphs">Time Series</text>
<rect x="374.50" y="240.80" width="468.20" height="317.40" fill="#ffffff"/>
<line x1="374.50" y1="522.45" x2="842.70" y2="522.45" stroke="#e4e4e4" stroke-width="0.6"/>
<line x1="374.50" y1="486.70" x2="842.70" y2="486.70" stroke="#e4e4e4" stroke-width="0.6"/>
<line x1="374.50" y1="450.95" x2="842.70" y2="450.95" stroke="#e4e4e4" stroke-width="0.6"/>
<line x1="374.50" y1="415.20" x2="842.70" y2="415.20" stroke="#e4e4e4" stroke-width="0.6"/>
<line x1="374.50" y1="379.45" x2="842.70" y2="379.45" stroke="#e4e4e4" stroke-width="0.6"/>
<line x1="374.50" y1="343.70" x2="842.70" y2="343.70" stroke="#e4e4e4" stroke-width="0.6"/>
<line x1="374.50" y1="307.95" x2="842.70" y2="307.95" stroke="#e4e4e4" stroke-width="0.6"/>
<line x1="374.50" y1="272.20" x2="842.70" y2="272.20" stroke="#e4e4e4" stroke-width="0.6"/>
<line x1="404.70" y1="240.80" x2="404.70" y2="558.20" stroke="#e4e4e4" stroke-width="0.6"/>
<line x1="447.20" y1="240.80" x2="447.20" y2="558.20" stroke="#e4e4e4" stroke-width="0.6"/>
<line x1="489.70" y1="240.80" x2="489.70" y2="558.20" stroke="#e4e4e4" stroke-width="0.6"/>
<line x1="532.20" y1="240.80" x2="532.20" y2="558.20" stroke="#e4e4e4" stroke-width="0.6"/>
<line x1="574.70" y1="240.80" x2="574.70" y2="558.20" stroke="#e4e4e4" stroke-width="0.6"/>
<line x1="617.20" y1="240.80" x2="617.20" y2="558.20" stroke="#e4e4e4" stroke-width="0.6"/>
<line x1="659.70" y1="240.80" x2="659.70" y2="558.20" stroke="#e4e4e4" stroke-width="0.6"/>
<line x1="702.20" y1="240.80" x2="702.20" y2="558.20" stroke="#e4e4e4" stroke-width="0.6"/>
<line x1="744.70" y1="240.80" x2="744.70" y2="558.20" stroke="#e4e4e4" stroke-width="0.6"/>
<line x1="787.20" y1="240.80" x2="787.20" y2="558.20" stroke="#e4e4e4" stroke-width="0.6"/>
<line x1="829.70" y1="240.80" x2="829.70" y2="558.20" stroke="#e4e4e4" stroke-width="0.6"/>
<svg x="374.5" y="240.8" width="468.20000000000005" height="317.40000000000003" viewBox="374.5 240.8 468.20000000000005 317.40000000000003" overflow="hidden">
<path d="M374.8,541.3 L375.9,550.8 L376.8,549.3 L377.7,553.2 L378.5,552.9 L379.4,554.2 L380.2,557.2 L381.1,555.1 L381.9,555.0 L382.8,556.2 L383.6,556.9 L384.4,555.5 L385.3,556.5 L386.1,554.6 L387.0,555.3 L387.8,555.1 L388.6,553.9 L389.4,553.5 L390.3,553.3 L391.1,555.0 L391.9,555.0 L392.7,554.7 L393.6,555.1 L394.4,553.1 L395.2,554.7 L396.1,555.0 L396.9,555.5 L397.7,553.5 L398.5,554.1 L399.3,552.0 L400.0,553.9 L400.8,551.7 L401.6,552.7 L402.4,556.0 L403.2,551.7 L404.0,555.6 L404.8,555.0 L405.6,554.2 L406.4,555.2 L407.2,555.3 L408.0,555.9 L408.7,554.3 L409.5,553.8 L410.3,553.8 L411.1,553.2 L411.9,554.4 L412.7,553.3 L413.5,555.6 L414.3,551.7 L415.1,552.7 L415.9,552.8 L416.6,551.2 L417.4,556.3 L418.2,550.6 L419.0,553.3 L419.8,552.9 L420.6,555.7 L421.4,550.9 L422.2,554.8 L423.0,552.4 L423.8,553.0 L424.6,552.4 L425.3,554.1 L426.1,551.7 L426.9,553.1 L427.7,553.7 L428.5,555.6 L429.3,550.1 L430.1,555.2 L430.9,554.5 L431.7,552.6 L432.5,553.6 L433.3,552.6 L434.0,555.4 L434.8,553.5 L435.6,552.9 L436.4,552.9 L437.2,553.0 L438.0,552.6 L438.9,551.3 L439.7,554.7 L440.5,549.1 L441.3,546.5 L442.2,550.6 L443.0,550.1 L443.8,550.4 L444.6,549.2 L445.5,548.9 L446.3,549.1 L447.1,549.5 L448.0,547.3 L448.8,547.9 L449.6,551.4 L450.4,550.2 L451.2,548.7 L452.0,553.6 L452.8,552.1 L453.6,550.8 L454.4,550.6 L455.2,553.1 L456.0,552.1 L456.8,552.1 L457.6,552.1 L458.4,553.4 L459.2,555.7 L460.1,554.0 L460.9,553.0 L461.7,556.0 L462.5,555.5 L463.3,556.7 L464.1,557.5 L464.9,555.6 L465.7,555.5 L466.5,555.5 L467.3,553.9 L468.1,556.1 L468.9,556.9 L469.7,555.2 L470.5,554.5 L471.3,554.4 L472.2,553.6 L472.9,552.9 L473.7,552.9 L474.5,551.7 L475.2,551.7 L476.0,549.6 L476.8,551.6 L477.5,550.6 L478.3,548.8 L479.1,547.0 L479.9,549.7 L480.7,550.9 L481.4,548.2 L482.2,548.3 L483.0,547.9 L483.8,549.2 L484.6,546.9 L485.4,549.1 L486.2,547.2 L486.9,548.5 L487.8,547.9 L488.6,548.2 L489.5,547.1 L490.3,548.7 L491.1,549.8 L492.0,551.6 L492.8,551.6 L493.7,551.0 L494.5,552.5 L495.3,553.4 L496.1,552.0 L497.0,551.7 L497.8,551.9 L498.6,553.6 L499.4,553.3 L500.3,551.5 L501.1,553.3 L501.9,552.3 L502.8,552.0 L503.6,554.7 L504.4,554.3 L505.2,552.3 L506.1,553.3 L506.9,553.9 L507.7,552.4 L508.5,553.1 L509.4,554.1 L510.2,550.9 L511.0,553.7 L511.9,554.2 L512.7,553.9 L513.5,551.5 L514.3,553.6 L515.2,552.1 L516.0,552.6 L516.8,551.3 L517.6,549.5 L518.4,546.9 L519.2,545.7 L520.0,547.7 L520.8,545.5 L521.6,547.4 L522.4,547.4 L523.2,546.5 L524.0,550.0 L524.8,547.1 L525.6,549.8 L526.4,544.5 L527.2,544.3 L528.0,548.5 L528.8,548.2 L529.5,547.0 L530.3,547.4 L531.1,545.1 L531.9,546.8 L532.7,546.3 L533.5,547.5 L534.3,549.0 L535.1,547.9 L535.9,548.6 L536.7,547.4 L537.5,548.0 L538.3,549.0 L539.1,548.7 L539.9,551.0 L540.7,548.4 L541.5,552.2 L542.3,548.8 L543.1,551.6 L543.9,549.5 L544.7,552.9 L545.5,551.2 L546.3,551.7 L547.1,552.4 L547.9,550.9 L548.7,550.6 L549.5,549.5 L550.2,554.0 L551.0,551.3 L551.8,551.2 L552.6,551.7 L553.4,554.0 L554.2,549.0 L555.0,551.3 L555.8,550.2 L556.6,551.2 L557.4,547.9 L558.2,549.5 L559.0,550.9 L559.8,551.6 L560.6,551.4 L561.4,548.0 L562.2,548.9 L563.0,548.5 L563.8,546.6 L564.6,546.2 L565.4,548.9 L566.2,548.0 L567.0,547.4 L567.8,549.0 L568.6,545.9 L569.4,547.8 L570.1,546.9 L570.9,546.7 L571.7,547.2 L572.5,546.7 L573.3,546.6 L574.1,546.5 L574.9,548.5 L575.7,545.4 L576.5,547.0 L577.3,546.3 L578.1,544.9 L578.9,546.2 L579.7,543.9 L580.5,546.4 L581.3,543.7 L582.1,543.9 L583.0,544.9 L583.8,545.4 L584.6,545.3 L585.4,545.2 L586.3,543.6 L587.1,542.5 L587.9,544.3 L588.7,543.9 L589.6,542.1 L590.4,544.9 L591.2,544.1 L592.0,542.9 L592.9,545.0 L593.7,543.0 L594.5,543.8 L595.3,545.8 L596.2,543.5 L597.0,545.9 L597.8,544.3 L598.6,547.3 L599.5,545.5 L600.3,546.8 L601.1,544.7 L601.9,546.3 L602.7,548.1 L603.5,547.6 L604.3,544.7 L605.1,548.4 L605.9,548.4 L606.7,546.9 L607.5,549.3 L608.3,546.2 L609.1,547.6 L609.9,549.2 L610.7,549.6 L611.6,549.4 L612.4,546.3 L613.2,545.3 L614.0,548.0 L614.8,545.5 L615.6,547.1 L616.4,545.5 L617.2,548.4 L618.0,548.0 L618.8,547.6 L619.6,546.8 L620.4,546.7 L621.2,546.2 L622.0,547.0 L622.8,546.7 L623.7,546.5 L624.5,545.0 L625.3,547.6 L626.1,545.1 L627.0,546.1 L627.8,545.6 L628.6,542.3 L629.4,540.9 L630.3,544.3 L631.1,541.7 L631.9,541.9 L632.7,544.1 L633.4,547.3 L634.2,548.2 L634.9,552.3 L635.7,552.2 L636.5,553.2 L637.2,550.5 L638.0,555.0 L638.7,554.7 L639.5,552.4 L640.2,554.1 L641.0,555.5 L641.7,555.9 L642.5,554.7 L643.3,556.1 L644.0,554.0 L644.8,552.2 L645.5,552.3 L646.3,553.8 L647.0,551.6 L647.8,553.3 L648.7,553.3 L649.5,552.6 L650.3,552.9 L651.1,551.2 L651.9,551.2 L652.7,550.2 L653.5,550.0 L654.3,548.6 L655.1,549.7 L655.9,548.8 L656.7,548.1 L657.5,550.0 L658.3,550.2 L659.1,548.9 L659.9,550.6 L660.7,549.5 L661.4,549.0 L662.2,546.3 L662.9,544.6 L663.7,546.7 L664.4,545.8 L665.2,545.8 L666.0,545.5 L666.8,546.8 L667.7,544.9 L668.5,546.3 L669.3,544.4 L670.1,542.7 L671.0,545.2 L671.8,547.9 L672.6,543.9 L673.4,547.5 L674.3,545.5 L675.1,545.8 L675.9,546.3 L676.7,546.5 L677.5,544.9 L678.3,546.3 L679.1,546.6 L679.9,547.1 L680.7,544.9 L681.5,547.9 L682.3,548.3 L683.1,548.9 L683.9,544.0 L684.7,545.9 L685.5,543.2 L686.3,546.0 L687.1,546.2 L687.9,543.9 L688.7,543.3 L689.5,545.6 L690.3,546.1 L691.1,544.2 L691.9,544.8 L692.7,541.8 L693.5,544.1 L694.3,545.2 L695.1,545.1 L695.9,546.9 L696.7,543.3 L697.5,541.8 L698.3,545.4 L699.1,544.2 L699.9,545.4 L700.7,546.1 L701.5,546.0 L702.3,547.2 L703.0,547.2 L703.8,543.4 L704.6,545.6 L705.4,548.3 L706.2,545.3 L707.0,547.2 L707.8,546.0 L708.6,545.6 L709.4,548.3 L710.2,547.7 L711.0,546.1 L711.8,547.7 L712.6,544.9 L713.4,545.8 L714.2,548.0 L715.0,547.0 L715.8,545.3 L716.6,546.9 L717.3,546.5 L718.1,547.4 L718.9,546.7 L719.7,544.8 L720.5,544.2 L721.3,544.4 L722.1,544.0 L722.9,545.9 L723.7,545.7 L724.5,545.1 L725.3,543.6 L726.1,542.5 L726.9,543.6 L727.7,541.7 L728.5,542.2 L729.3,539.4 L730.1,540.7 L730.9,542.9 L731.7,539.3 L732.4,538.4 L733.2,540.0 L734.0,542.2 L734.8,541.7 L735.6,539.1 L736.4,538.8 L737.2,539.0 L738.0,537.8 L738.8,538.8 L739.6,538.2 L740.4,536.5 L741.2,537.4 L742.0,537.7 L742.8,536.7 L743.6,536.1 L744.4,538.6 L745.2,539.7 L746.0,536.6 L746.8,536.3 L747.5,537.3 L748.3,536.1 L749.1,535.2 L749.9,537.8 L750.7,534.6 L751.5,534.9 L752.3,534.9 L753.1,534.5 L753.9,535.2 L754.7,536.2 L755.5,537.2 L756.3,536.1 L757.1,535.2 L757.9,533.4 L758.7,534.8 L759.5,533.6 L760.3,534.6 L761.1,535.9 L761.8,534.8 L762.6,534.2 L763.4,533.3 L764.2,534.2 L765.0,534.3 L765.8,532.8 L766.6,533.3 L767.4,535.0 L768.2,532.1 L769.0,534.0 L769.8,533.5 L770.6,537.4 L771.4,536.6 L772.2,536.9 L773.0,537.1 L773.8,537.4 L774.6,537.8 L775.4,535.7 L776.2,538.5 L776.9,539.4 L777.7,537.1 L778.5,540.5 L779.3,540.7 L780.1,538.2 L780.9,540.0 L781.7,540.6 L782.5,540.7 L783.3,542.3 L784.1,540.5 L784.9,542.3 L785.7,543.2 L786.5,544.1 L787.3,543.5 L788.1,543.4 L788.9,545.0 L789.7,541.8 L790.5,545.9 L791.3,544.6 L792.0,543.6 L792.8,545.0 L793.6,543.5 L794.4,543.5 L795.2,546.0 L796.0,545.7 L796.8,548.0 L797.6,546.2 L798.4,546.0 L799.2,546.7 L800.0,550.5 L800.8,548.6 L801.6,548.0 L802.4,547.8 L803.2,547.5 L804.0,548.5 L804.8,549.1 L805.6,549.8 L806.4,549.6 L807.1,548.3 L807.9,546.9 L808.7,546.4 L809.5,544.3 L810.3,545.8 L811.1,547.5 L811.9,546.3 L812.7,547.0 L813.5,544.6 L814.3,547.3 L815.1,546.3 L815.9,545.8 L816.7,546.1 L817.5,542.4 L818.3,544.4 L819.1,543.8 L819.9,547.1 L820.7,544.2 L821.5,543.6 L822.3,545.0 L823.1,542.3 L824.0,545.2 L824.8,542.2 L825.6,542.8 L826.4,541.4 L827.2,543.3 L828.1,539.2 L828.9,542.6 L829.7,540.4 L830.5,541.3 L831.3,539.4 L832.2,541.0 L833.0,540.6 L833.8,541.4 L834.6,541.2 L835.4,541.8 L836.2,542.5 L836.9,540.9 L837.7,540.0 L838.5,540.1 L839.3,542.9 L840.1,541.7 L840.9,543.7 L841.7,542.6" fill="none" stroke="#b56a3e" stroke-width="0.7"/>
<path d="M374.8,537.0 L375.4,476.2 L376.1,475.6 L376.8,485.1 L377.5,474.4 L378.2,492.7 L378.8,487.3 L379.4,497.8 L380.1,490.7 L380.8,488.4 L381.4,498.5 L382.1,493.2 L382.8,496.7 L383.4,495.0 L384.1,510.3 L384.8,508.4 L385.6,514.7 L386.4,523.0 L387.2,516.8 L388.0,515.8 L388.8,525.7 L389.6,523.8 L390.4,535.1 L391.2,531.6 L392.0,540.5 L392.8,542.9 L393.5,545.9 L394.2,549.1 L394.9,546.8 L395.5,552.2 L396.2,538.0 L396.9,530.0 L397.6,524.3 L398.2,501.3 L398.9,516.0 L399.6,521.4 L400.2,516.7 L400.9,525.0 L401.6,524.4 L402.3,513.7 L402.9,501.4 L403.6,513.0 L404.3,513.3 L404.9,511.6 L405.6,517.7 L406.3,527.5 L407.0,530.7 L407.6,536.1 L408.3,534.6 L409.0,542.3 L409.8,536.0 L410.6,533.5 L411.4,540.2 L412.2,523.0 L413.0,523.5 L413.7,531.1 L414.4,530.7 L415.0,530.1 L415.7,534.7 L416.5,538.1 L417.3,537.1 L418.1,525.5 L418.9,530.2 L419.7,526.8 L420.4,534.7 L421.1,533.5 L421.7,538.9 L422.4,544.2 L423.1,547.9 L423.8,541.1 L424.4,545.3 L425.1,542.5 L425.8,513.1 L426.5,490.5 L427.1,495.3 L427.8,498.5 L428.5,500.1 L429.1,513.7 L429.8,510.1 L430.5,509.6 L431.2,528.5 L431.8,519.6 L432.6,522.7 L433.4,526.7 L434.2,520.3 L435.1,524.6 L435.9,532.2 L436.5,536.0 L437.2,528.0 L437.9,532.4 L438.5,536.2 L439.2,537.6 L439.9,540.9 L440.6,543.6 L441.2,548.4 L442.0,536.9 L442.8,521.3 L443.7,521.5 L444.5,513.8 L445.3,504.6 L445.9,512.5 L446.6,505.9 L447.3,510.9 L448.0,521.6 L448.6,524.2 L449.3,529.4 L450.0,543.5 L450.6,547.2 L451.3,538.6 L452.0,538.8 L452.7,529.3 L453.3,531.0 L454.0,519.0 L454.7,521.1 L455.3,523.6 L456.0,536.2 L456.7,535.5 L457.4,527.2 L458.0,529.9 L458.7,543.1 L459.5,542.1 L460.3,544.1 L461.1,545.7 L461.9,546.3 L462.7,553.1 L463.5,554.1 L464.4,551.9 L465.2,556.5 L466.0,558.0 L466.8,557.7 L467.6,554.4 L468.4,551.5 L469.2,544.5 L470.0,544.2 L470.8,540.5 L471.5,533.2 L472.2,529.1 L472.8,515.9 L473.5,510.6 L474.2,501.6 L474.8,495.3 L475.5,499.9 L476.2,486.3 L476.9,492.8 L477.5,488.7 L478.2,489.5 L478.9,513.4 L479.5,494.7 L480.1,500.5 L480.8,501.0 L481.5,495.2 L482.2,478.2 L482.9,482.6 L483.6,461.7 L484.2,465.6 L484.9,451.2 L485.6,466.5 L486.3,448.9 L486.9,455.5 L487.6,442.2 L488.3,449.3 L489.0,471.7 L489.6,453.7 L490.3,459.5 L491.0,456.5 L491.6,464.2 L492.3,466.8 L493.0,471.9 L493.7,478.4 L494.3,479.2 L495.0,475.1 L495.7,480.8 L496.3,475.0 L497.0,489.2 L497.7,483.5 L498.4,477.9 L499.0,477.0 L499.7,476.9 L500.4,462.4 L501.0,476.7 L501.7,479.7 L502.4,496.2 L503.1,495.6 L503.7,491.9 L504.4,490.6 L505.1,497.4 L505.8,489.6 L506.4,482.8 L507.1,493.9 L507.8,477.3 L508.4,496.3 L509.1,489.0 L509.8,499.4 L510.5,487.3 L511.1,503.7 L511.8,494.7 L512.5,489.1 L513.1,496.4 L513.8,504.3 L514.5,485.4 L515.2,502.8 L515.8,493.8 L516.5,500.3 L517.2,493.7 L517.8,510.0 L518.5,473.4 L519.2,467.3 L519.9,465.0 L520.5,463.4 L521.2,458.5 L521.9,468.3 L522.6,468.5 L523.2,462.3 L523.9,472.3 L524.6,471.9 L525.3,459.6 L526.0,456.0 L526.8,462.2 L527.6,455.9 L528.3,478.8 L529.1,467.8 L529.8,450.2 L530.6,458.2 L531.3,459.8 L532.1,452.3 L532.9,457.6 L533.6,468.4 L534.4,457.4 L535.1,451.4 L535.9,446.0 L536.6,448.7 L537.4,446.5 L538.1,450.4 L538.9,440.3 L539.7,440.7 L540.4,454.7 L541.2,459.6 L541.9,474.2 L542.7,462.9 L543.4,467.2 L544.2,463.7 L545.0,479.2 L545.7,483.7 L546.5,478.1 L547.2,482.3 L548.0,476.1 L548.7,471.2 L549.5,465.6 L550.2,469.0 L551.0,461.6 L551.8,468.8 L552.5,476.4 L553.3,474.5 L554.0,471.6 L554.8,466.4 L555.5,463.5 L556.3,454.8 L557.1,461.2 L557.8,478.9 L558.6,457.8 L559.3,458.2 L560.1,475.9 L560.8,469.2 L561.6,467.0 L562.3,457.5 L563.1,478.4 L563.9,469.1 L564.6,466.1 L565.4,468.3 L566.1,457.6 L566.9,444.9 L567.6,437.7 L568.4,423.1 L569.2,425.8 L569.9,429.1 L570.7,441.0 L571.4,443.1 L572.2,466.2 L572.9,441.6 L573.7,427.0 L574.4,425.5 L575.2,462.3 L576.0,434.5 L576.7,433.7 L577.5,439.7 L578.2,439.0 L579.0,435.7 L579.7,448.3 L580.5,425.7 L581.3,421.5 L582.0,422.5 L582.8,407.7 L583.5,411.0 L584.3,430.6 L585.0,396.2 L585.8,398.9 L586.5,385.6 L587.3,430.3 L588.1,389.3 L588.8,396.5 L589.6,438.3 L590.3,400.9 L591.1,408.0 L591.8,397.4 L592.6,406.0 L593.4,430.4 L594.1,411.2 L594.9,433.5 L595.6,414.6 L596.4,441.7 L597.1,437.8 L597.9,447.1 L598.6,415.1 L599.4,412.5 L600.2,415.6 L600.9,418.0 L601.7,442.9 L602.4,438.2 L603.2,430.7 L603.9,434.2 L604.7,453.4 L605.5,439.3 L606.2,430.1 L607.0,424.3 L607.7,428.5 L608.5,425.8 L609.2,472.3 L610.0,450.3 L610.7,429.5 L611.5,436.9 L612.3,463.4 L613.0,439.9 L613.8,441.3 L614.5,443.5 L615.3,469.7 L616.0,452.5 L616.8,454.7 L617.5,459.4 L618.3,461.1 L619.1,457.1 L619.8,457.9 L620.6,461.8 L621.3,470.3 L622.1,482.6 L622.8,477.5 L623.6,473.3 L624.4,468.2 L625.1,469.2 L625.9,468.0 L626.6,463.8 L627.4,481.1 L628.1,448.4 L628.9,441.9 L629.6,456.3 L630.4,461.6 L631.2,465.7 L631.9,499.3 L632.7,507.6 L633.4,509.3 L634.2,510.1 L634.9,531.0 L635.7,526.4 L636.5,529.6 L637.2,533.7 L638.0,541.3 L638.7,543.1 L639.5,547.3 L640.2,551.9 L641.0,552.3 L641.7,553.8 L642.5,555.1 L643.3,546.7 L644.0,542.1 L644.8,535.0 L645.5,529.9 L646.3,522.8 L647.0,515.7 L647.8,508.4 L648.6,504.2 L649.3,502.1 L650.1,490.2 L650.8,482.8 L651.6,486.5 L652.3,469.2 L653.1,460.9 L653.8,465.3 L654.6,471.8 L655.4,448.6 L656.1,476.9 L656.9,452.7 L657.6,461.8 L658.4,443.8 L659.1,470.9 L659.9,438.3 L660.7,434.1 L661.4,439.8 L662.2,447.8 L662.9,444.0 L663.7,459.6 L664.4,456.9 L665.2,457.2 L665.9,445.1 L666.7,438.6 L667.5,447.7 L668.2,446.5 L669.0,444.6 L669.7,446.0 L670.5,427.3 L671.2,432.5 L672.0,404.3 L672.8,407.3 L673.5,398.5 L674.3,412.6 L675.0,413.0 L675.8,422.3 L676.5,452.8 L677.3,443.6 L678.0,448.4 L678.8,452.4 L679.6,453.1 L680.3,446.9 L681.1,453.4 L681.8,454.5 L682.6,447.7 L683.3,460.0 L684.1,473.8 L684.9,449.1 L685.7,448.3 L686.4,450.1 L687.2,442.0 L688.0,447.5 L688.7,443.6 L689.5,433.8 L690.2,435.9 L690.9,440.7 L691.7,438.0 L692.4,435.6 L693.1,433.9 L693.9,430.9 L694.6,414.5 L695.4,426.5 L696.1,421.5 L696.9,403.1 L697.6,453.1 L698.4,440.6 L699.1,414.1 L699.8,436.3 L700.5,419.5 L701.2,442.3 L701.9,430.8 L702.6,435.7 L703.3,428.6 L704.0,433.7 L704.7,405.9 L705.3,395.5 L706.1,407.9 L706.8,402.0 L707.5,412.1 L708.3,430.1 L709.0,398.2 L709.7,397.8 L710.5,408.3 L711.2,418.7 L712.0,453.9 L712.8,436.2 L713.5,474.4 L714.2,441.1 L715.0,443.9 L715.7,440.2 L716.4,440.1 L717.2,444.3 L717.9,473.4 L718.6,456.6 L719.3,456.1 L720.1,445.7 L720.8,467.1 L721.5,435.1 L722.2,446.9 L723.0,427.2 L723.7,420.0 L724.5,415.8 L725.2,428.1 L726.0,435.8 L726.7,428.7 L727.5,429.5 L728.2,429.8 L729.0,440.8 L729.7,436.9 L730.4,418.3 L731.1,397.0 L731.9,389.2 L732.6,388.0 L733.3,362.5 L734.1,379.9 L734.8,359.0 L735.5,361.3 L736.2,363.8 L737.0,364.1 L737.7,358.4 L738.4,386.7 L739.1,393.0 L739.8,423.3 L740.5,397.0 L741.2,408.0 L741.9,399.6 L742.6,452.5 L743.4,390.9 L744.1,392.5 L744.8,390.4 L745.6,385.9 L746.3,403.8 L747.0,477.4 L747.7,457.3 L748.4,418.3 L749.1,424.2 L749.8,412.0 L750.5,395.8 L751.2,376.3 L752.0,396.5 L752.7,351.4 L753.4,347.8 L754.2,338.1 L754.9,330.4 L755.6,356.2 L756.3,358.2 L757.1,380.9 L757.8,372.3 L758.5,352.5 L759.3,342.3 L760.0,362.2 L760.7,340.3 L761.4,317.1 L762.2,326.9 L762.9,338.3 L763.6,386.3 L764.4,328.3 L765.1,319.3 L765.8,313.8 L766.5,406.0 L767.3,340.8 L768.0,331.8 L768.8,323.8 L769.5,381.3 L770.3,329.4 L771.0,324.8 L771.8,341.1 L772.5,371.0 L773.2,376.2 L774.0,369.9 L774.7,347.5 L775.4,345.9 L776.2,360.5 L776.9,362.0 L777.6,367.0 L778.3,372.4 L779.1,401.4 L779.8,396.4 L780.5,363.2 L781.3,367.3 L782.0,428.5 L782.7,375.5 L783.4,378.2 L784.2,381.8 L784.9,373.2 L785.6,408.1 L786.4,406.7 L787.1,413.1 L787.8,421.0 L788.5,446.9 L789.3,454.4 L790.0,434.8 L790.7,445.3 L791.5,437.5 L792.2,430.9 L792.9,437.1 L793.6,475.9 L794.4,436.9 L795.1,449.0 L795.8,459.6 L796.6,468.2 L797.3,474.8 L798.0,487.6 L798.7,487.1 L799.4,489.2 L800.1,492.9 L800.8,509.9 L801.5,507.3 L802.2,499.5 L803.0,483.2 L803.7,462.0 L804.4,454.6 L805.1,445.9 L805.9,430.0 L806.6,451.7 L807.4,425.7 L808.2,427.6 L808.9,460.0 L809.7,413.4 L810.4,426.4 L811.1,481.3 L811.8,477.5 L812.6,444.3 L813.3,484.5 L814.0,439.9 L814.7,424.0 L815.4,412.6 L816.1,421.6 L816.9,423.1 L817.6,417.6 L818.3,446.1 L819.0,399.2 L819.7,391.0 L820.5,401.1 L821.2,405.7 L822.0,411.8 L822.7,395.0 L823.5,430.4 L824.2,427.4 L825.0,432.1 L825.7,400.3 L826.4,415.5 L827.1,414.8 L827.9,422.0 L828.6,414.6 L829.3,398.0 L830.1,395.2 L830.8,401.6 L831.5,388.2 L832.2,389.3 L833.0,378.5 L833.7,422.3 L834.4,397.7 L835.2,418.7 L835.9,391.5 L836.6,409.2 L837.3,435.4 L838.1,409.8 L838.8,428.8 L839.5,398.1 L840.3,398.9 L841.0,390.7 L841.7,387.4" fill="none" stroke="#f093c2" stroke-width="0.85"/>
<path d="M374.8,544.6 L375.4,494.7 L376.0,497.3 L376.7,495.9 L377.4,497.4 L378.1,489.7 L378.7,494.8 L379.4,495.8 L380.1,496.9 L380.8,499.7 L381.4,497.9 L382.1,495.9 L382.8,491.2 L383.4,492.7 L384.1,495.1 L384.8,492.7 L385.5,510.9 L386.1,511.9 L386.9,514.2 L387.7,520.0 L388.5,523.1 L389.4,525.9 L390.2,527.1 L391.0,534.0 L391.8,535.0 L392.6,545.6 L393.4,545.0 L394.2,551.5 L394.9,548.2 L395.5,544.9 L396.2,540.3 L396.9,538.1 L397.6,521.6 L398.3,522.2 L399.0,514.8 L399.7,520.2 L400.4,531.0 L401.0,531.3 L401.7,539.3 L402.3,526.9 L403.0,524.0 L403.6,511.0 L404.4,515.0 L405.2,528.6 L406.0,528.2 L406.8,530.3 L407.6,534.5 L408.3,533.8 L409.0,537.3 L409.7,543.1 L410.3,540.8 L411.1,542.2 L411.9,534.8 L412.7,535.5 L413.5,529.5 L414.4,532.8 L415.0,534.4 L415.7,534.4 L416.4,534.9 L417.0,540.6 L417.8,540.5 L418.7,536.9 L419.5,538.0 L420.3,537.9 L421.1,534.0 L421.7,538.3 L422.4,545.8 L423.1,548.7 L423.8,555.8 L424.5,532.5 L425.2,516.5 L425.9,490.1 L426.5,494.9 L427.2,505.6 L427.8,510.8 L428.6,513.3 L429.4,518.7 L430.2,524.1 L431.0,520.3 L431.8,528.6 L432.6,529.5 L433.4,530.6 L434.2,533.8 L435.1,530.1 L435.9,535.6 L436.7,536.9 L437.5,540.8 L438.3,543.4 L439.1,546.5 L439.9,549.4 L440.7,544.4 L441.5,541.4 L442.3,532.5 L443.1,525.5 L443.9,518.1 L444.7,508.6 L445.5,515.6 L446.3,523.4 L447.2,518.9 L448.0,528.1 L448.6,534.5 L449.3,538.8 L450.0,545.8 L450.6,552.9 L451.3,550.6 L452.0,544.9 L452.7,541.8 L453.3,535.0 L454.0,538.0 L454.7,538.7 L455.3,540.9 L456.0,541.4 L456.8,545.2 L457.6,548.2 L458.3,546.7 L459.1,549.0 L459.9,551.2 L460.6,551.6 L461.4,554.8 L462.2,554.1 L463.0,552.2 L463.8,553.0 L464.6,556.5 L465.4,556.9 L466.2,557.2 L467.0,555.2 L467.8,554.6 L468.7,551.0 L469.5,555.6 L470.1,545.4 L470.8,543.2 L471.5,532.5 L472.2,527.4 L472.8,522.6 L473.5,514.4 L474.2,506.8 L474.8,504.7 L475.5,508.0 L476.2,511.2 L476.9,513.3 L477.5,516.1 L478.2,517.7 L478.9,518.2 L479.5,520.2 L480.2,522.8 L480.9,507.0 L481.6,491.5 L482.2,484.9 L482.9,484.4 L483.6,473.4 L484.2,466.7 L484.9,466.5 L485.6,467.4 L486.3,465.3 L486.9,469.0 L487.6,470.2 L488.3,459.3 L489.0,472.0 L489.6,485.9 L490.3,473.4 L491.0,481.1 L491.6,487.0 L492.3,486.0 L493.0,489.2 L493.7,479.0 L494.3,477.7 L495.0,480.0 L495.7,482.2 L496.3,485.2 L497.0,494.5 L497.7,497.6 L498.4,494.8 L499.0,491.4 L499.7,491.6 L500.4,488.3 L501.0,489.7 L501.7,497.0 L502.4,499.9 L503.1,502.4 L503.7,502.9 L504.4,496.1 L505.1,497.7 L505.8,495.2 L506.4,502.8 L507.1,502.3 L507.8,509.0 L508.4,509.4 L509.1,502.4 L509.8,498.9 L510.5,502.2 L511.1,498.6 L511.8,500.3 L512.5,499.0 L513.1,505.2 L513.8,505.4 L514.6,507.1 L515.4,507.9 L516.2,505.5 L517.0,502.9 L517.8,509.5 L518.5,493.5 L519.2,478.8 L519.9,482.7 L520.5,477.6 L521.2,482.0 L521.9,475.9 L522.6,480.0 L523.3,481.6 L524.0,484.8 L524.7,480.1 L525.4,490.2 L526.0,489.2 L526.8,482.6 L527.6,484.9 L528.3,481.0 L529.1,481.4 L529.8,476.4 L530.6,472.1 L531.3,465.8 L532.1,478.9 L532.9,479.2 L533.6,477.6 L534.4,477.4 L535.1,481.1 L535.9,471.4 L536.6,474.8 L537.4,470.1 L538.1,463.9 L538.9,471.1 L539.7,473.0 L540.4,479.9 L541.2,479.2 L541.9,472.1 L542.7,473.0 L543.4,482.6 L544.2,485.2 L545.0,485.8 L545.7,487.3 L546.5,494.3 L547.2,494.4 L548.0,497.8 L548.8,504.4 L549.6,504.5 L550.3,503.6 L551.1,504.5 L551.9,509.1 L552.7,516.3 L553.4,504.4 L554.1,505.3 L554.8,491.9 L555.6,487.9 L556.3,485.2 L557.1,479.2 L557.8,481.0 L558.6,475.1 L559.3,481.1 L560.1,481.9 L560.8,474.5 L561.6,479.0 L562.3,478.4 L563.1,473.9 L563.9,492.2 L564.6,486.5 L565.4,488.6 L566.1,482.2 L566.9,476.4 L567.6,479.5 L568.4,458.7 L569.2,459.4 L569.9,453.9 L570.7,457.3 L571.4,463.4 L572.2,460.4 L572.9,460.6 L573.7,464.0 L574.4,472.4 L575.2,471.3 L576.0,467.8 L576.7,467.9 L577.5,456.6 L578.2,460.4 L579.0,456.9 L579.7,451.1 L580.5,446.4 L581.3,451.0 L582.0,442.1 L582.8,441.5 L583.5,436.2 L584.3,446.4 L585.0,436.5 L585.8,432.5 L586.5,431.8 L587.3,433.7 L588.1,436.9 L588.8,430.6 L589.6,434.8 L590.3,444.0 L591.1,448.2 L591.8,438.6 L592.6,443.0 L593.4,439.5 L594.1,431.5 L594.9,439.6 L595.6,435.7 L596.4,448.3 L597.1,447.7 L597.9,452.4 L598.6,450.7 L599.4,461.2 L600.2,457.2 L600.9,465.0 L601.7,469.0 L602.4,458.5 L603.2,466.0 L603.9,467.7 L604.7,460.9 L605.5,467.5 L606.2,465.0 L607.0,464.3 L607.7,460.1 L608.5,465.2 L609.2,465.2 L610.0,481.0 L610.7,474.7 L611.5,472.8 L612.3,468.1 L613.0,478.9 L613.8,468.0 L614.5,477.3 L615.3,475.5 L616.0,471.4 L616.8,468.3 L617.5,472.8 L618.3,470.5 L619.1,479.8 L619.8,485.7 L620.6,485.1 L621.3,487.9 L622.1,484.3 L622.8,489.9 L623.6,486.6 L624.4,489.5 L625.1,494.2 L625.9,500.9 L626.6,494.2 L627.4,495.0 L628.1,490.1 L628.9,497.5 L629.6,495.2 L630.4,494.7 L631.2,495.5 L631.9,501.4 L632.7,505.1 L633.4,513.4 L634.2,516.3 L634.9,522.2 L635.7,531.1 L636.5,535.0 L637.2,540.4 L638.0,547.2 L638.7,550.3 L639.5,553.8 L640.2,554.1 L641.0,552.8 L641.7,556.0 L642.5,554.8 L643.3,549.8 L644.0,544.0 L644.8,534.0 L645.5,529.6 L646.3,525.8 L647.0,516.3 L647.8,513.4 L648.6,505.0 L649.3,497.4 L650.1,494.2 L650.8,485.9 L651.6,491.2 L652.3,484.1 L653.1,487.4 L653.8,477.6 L654.6,481.3 L655.4,481.0 L656.1,478.1 L656.9,479.2 L657.6,474.1 L658.4,471.9 L659.1,469.7 L659.9,471.7 L660.7,469.8 L661.4,472.6 L662.2,469.4 L662.9,476.0 L663.7,483.4 L664.4,487.4 L665.2,499.9 L665.9,491.8 L666.7,475.1 L667.5,468.3 L668.2,461.4 L669.0,453.3 L669.7,454.4 L670.5,449.3 L671.2,459.0 L672.0,452.1 L672.8,448.7 L673.5,443.6 L674.3,452.3 L675.0,451.9 L675.8,457.1 L676.5,456.3 L677.3,462.3 L678.0,463.3 L678.8,471.8 L679.6,481.7 L680.3,475.0 L681.1,479.9 L681.8,490.6 L682.6,496.0 L683.3,496.8 L684.1,494.7 L684.9,489.0 L685.7,484.3 L686.4,482.2 L687.2,469.7 L688.0,469.4 L688.7,462.5 L689.5,460.0 L690.2,465.6 L690.9,459.5 L691.7,459.8 L692.4,470.7 L693.1,463.3 L693.8,475.0 L694.6,473.4 L695.3,468.5 L696.0,462.7 L696.8,452.8 L697.5,457.0 L698.2,446.1 L698.9,455.4 L699.7,436.8 L700.4,440.1 L701.1,422.9 L701.9,429.4 L702.6,440.2 L703.3,434.9 L704.0,436.1 L704.8,440.6 L705.5,447.3 L706.2,452.4 L707.0,450.0 L707.7,444.8 L708.4,457.1 L709.1,462.3 L709.9,470.0 L710.6,463.8 L711.3,466.3 L712.1,465.9 L712.8,473.3 L713.5,479.9 L714.2,472.6 L715.0,479.5 L715.7,478.4 L716.4,482.6 L717.2,487.3 L717.9,492.5 L718.6,491.1 L719.3,495.7 L720.1,491.1 L720.8,478.1 L721.5,468.8 L722.2,457.5 L723.0,444.8 L723.7,437.4 L724.4,439.3 L725.2,438.4 L725.9,444.5 L726.6,441.3 L727.3,446.8 L728.1,444.3 L728.8,448.9 L729.5,444.2 L730.3,446.1 L731.0,436.8 L731.7,441.1 L732.4,431.4 L733.2,423.4 L733.9,419.0 L734.6,404.8 L735.4,413.4 L736.1,413.9 L736.8,410.8 L737.5,422.5 L738.3,423.2 L739.0,437.9 L739.7,436.4 L740.5,445.9 L741.2,461.4 L741.9,466.0 L742.6,469.9 L743.4,484.3 L744.1,489.8 L744.8,506.2 L745.6,506.8 L746.3,489.9 L747.0,464.7 L747.7,454.5 L748.5,448.4 L749.2,421.7 L749.9,399.7 L750.7,402.1 L751.4,394.5 L752.1,391.5 L752.8,401.9 L753.6,395.0 L754.3,388.3 L755.0,390.1 L755.8,376.0 L756.5,371.4 L757.2,388.9 L757.9,388.2 L758.7,387.6 L759.4,383.0 L760.1,384.4 L760.9,379.9 L761.6,374.4 L762.3,372.3 L763.0,364.2 L763.8,394.0 L764.5,433.5 L765.2,456.3 L766.0,454.4 L766.7,437.0 L767.4,422.7 L768.1,416.6 L768.9,396.3 L769.6,386.3 L770.3,383.2 L771.1,383.0 L771.8,384.9 L772.5,391.2 L773.2,379.7 L774.0,367.7 L774.7,377.4 L775.4,379.9 L776.2,402.4 L776.9,411.1 L777.6,416.1 L778.3,424.2 L779.1,426.9 L779.8,428.3 L780.5,431.3 L781.3,431.2 L782.0,427.4 L782.7,438.4 L783.4,442.2 L784.2,430.4 L784.9,438.8 L785.6,438.2 L786.4,448.9 L787.1,448.8 L787.8,459.4 L788.5,461.4 L789.3,458.4 L790.0,461.8 L790.7,464.8 L791.5,472.6 L792.2,469.9 L792.9,477.9 L793.6,474.2 L794.4,485.8 L795.1,486.6 L795.8,484.0 L796.6,488.3 L797.3,494.2 L798.0,497.6 L798.7,497.0 L799.5,514.7 L800.2,526.7 L800.9,510.7 L801.6,496.9 L802.4,494.1 L803.1,480.0 L803.8,469.0 L804.6,459.9 L805.3,455.3 L806.0,460.5 L806.7,461.7 L807.5,464.6 L808.2,470.7 L808.9,470.9 L809.7,483.5 L810.4,482.4 L811.1,486.4 L811.8,481.6 L812.6,490.1 L813.3,494.0 L814.0,498.6 L814.8,503.1 L815.5,503.1 L816.2,490.0 L816.9,484.0 L817.7,476.9 L818.4,464.5 L819.1,442.2 L819.9,427.4 L820.6,432.5 L821.3,434.3 L822.0,440.9 L822.8,431.9 L823.5,430.0 L824.2,438.9 L825.0,431.1 L825.7,431.0 L826.4,437.9 L827.1,432.6 L827.9,426.6 L828.6,428.4 L829.3,425.7 L830.1,424.7 L830.8,420.2 L831.5,424.8 L832.2,418.1 L833.0,414.9 L833.7,427.6 L834.4,422.2 L835.2,434.7 L835.9,438.2 L836.6,438.5 L837.3,445.2 L838.1,435.4 L838.8,441.0 L839.5,432.9 L840.3,431.5 L841.0,434.5 L841.7,431.1" fill="none" stroke="#c94e84" stroke-width="0.8"/>
</svg>
<line x1="374.50" y1="240.80" x2="374.50" y2="558.20" stroke="#c2c2c2" stroke-width="1.5"/>
<line x1="842.70" y1="240.80" x2="842.70" y2="558.20" stroke="#acacac" stroke-width="1.3"/>
<line x1="373.80" y1="240.90" x2="843.30" y2="240.90" stroke="#8e8e8e" stroke-width="1.6"/>
<line x1="373.80" y1="558.20" x2="843.30" y2="558.20" stroke="#6a6a6a" stroke-width="1.2"/>
<line x1="374.50" y1="558.20" x2="378.00" y2="558.20" stroke="#9a9a9a" stroke-width="0.7"/>
<line x1="839.20" y1="558.20" x2="842.70" y2="558.20" stroke="#8a8a8a" stroke-width="0.7"/>
<text x="372.60" y="559.60" font-size="3.9" fill="#333" stroke="#333" stroke-width="0.08" font-weight="normal" text-anchor="end">0</text>
<line x1="374.50" y1="522.45" x2="378.00" y2="522.45" stroke="#9a9a9a" stroke-width="0.7"/>
<line x1="839.20" y1="522.45" x2="842.70" y2="522.45" stroke="#8a8a8a" stroke-width="0.7"/>
<text x="372.60" y="523.85" font-size="3.9" fill="#333" stroke="#333" stroke-width="0.08" font-weight="normal" text-anchor="end">5</text>
<line x1="374.50" y1="486.70" x2="378.00" y2="486.70" stroke="#9a9a9a" stroke-width="0.7"/>
<line x1="839.20" y1="486.70" x2="842.70" y2="486.70" stroke="#8a8a8a" stroke-width="0.7"/>
<text x="372.60" y="488.10" font-size="3.9" fill="#333" stroke="#333" stroke-width="0.08" font-weight="normal" text-anchor="end">10</text>
<line x1="374.50" y1="450.95" x2="378.00" y2="450.95" stroke="#9a9a9a" stroke-width="0.7"/>
<line x1="839.20" y1="450.95" x2="842.70" y2="450.95" stroke="#8a8a8a" stroke-width="0.7"/>
<text x="372.60" y="452.35" font-size="3.9" fill="#333" stroke="#333" stroke-width="0.08" font-weight="normal" text-anchor="end">15</text>
<line x1="374.50" y1="415.20" x2="378.00" y2="415.20" stroke="#9a9a9a" stroke-width="0.7"/>
<line x1="839.20" y1="415.20" x2="842.70" y2="415.20" stroke="#8a8a8a" stroke-width="0.7"/>
<text x="372.60" y="416.60" font-size="3.9" fill="#333" stroke="#333" stroke-width="0.08" font-weight="normal" text-anchor="end">20</text>
<line x1="374.50" y1="379.45" x2="378.00" y2="379.45" stroke="#9a9a9a" stroke-width="0.7"/>
<line x1="839.20" y1="379.45" x2="842.70" y2="379.45" stroke="#8a8a8a" stroke-width="0.7"/>
<text x="372.60" y="380.85" font-size="3.9" fill="#333" stroke="#333" stroke-width="0.08" font-weight="normal" text-anchor="end">25</text>
<line x1="374.50" y1="343.70" x2="378.00" y2="343.70" stroke="#9a9a9a" stroke-width="0.7"/>
<line x1="839.20" y1="343.70" x2="842.70" y2="343.70" stroke="#8a8a8a" stroke-width="0.7"/>
<text x="372.60" y="345.10" font-size="3.9" fill="#333" stroke="#333" stroke-width="0.08" font-weight="normal" text-anchor="end">30</text>
<line x1="374.50" y1="307.95" x2="378.00" y2="307.95" stroke="#9a9a9a" stroke-width="0.7"/>
<line x1="839.20" y1="307.95" x2="842.70" y2="307.95" stroke="#8a8a8a" stroke-width="0.7"/>
<text x="372.60" y="309.35" font-size="3.9" fill="#333" stroke="#333" stroke-width="0.08" font-weight="normal" text-anchor="end">35</text>
<line x1="374.50" y1="272.20" x2="378.00" y2="272.20" stroke="#9a9a9a" stroke-width="0.7"/>
<line x1="839.20" y1="272.20" x2="842.70" y2="272.20" stroke="#8a8a8a" stroke-width="0.7"/>
<text x="372.60" y="273.60" font-size="3.9" fill="#333" stroke="#333" stroke-width="0.08" font-weight="normal" text-anchor="end">40</text>
<line x1="404.70" y1="558.20" x2="404.70" y2="554.40" stroke="#5a5a5a" stroke-width="0.8"/>
<line x1="404.70" y1="240.80" x2="404.70" y2="244.60" stroke="#6a6a6a" stroke-width="0.8"/>
<text x="404.70" y="563.84" font-size="4.0" fill="#333" stroke="#333" stroke-width="0.08" font-weight="normal" text-anchor="middle">21,00h</text>
<line x1="447.20" y1="558.20" x2="447.20" y2="554.40" stroke="#5a5a5a" stroke-width="0.8"/>
<line x1="447.20" y1="240.80" x2="447.20" y2="244.60" stroke="#6a6a6a" stroke-width="0.8"/>
<text x="447.20" y="563.84" font-size="4.0" fill="#333" stroke="#333" stroke-width="0.08" font-weight="normal" text-anchor="middle">21,12h</text>
<line x1="489.70" y1="558.20" x2="489.70" y2="554.40" stroke="#5a5a5a" stroke-width="0.8"/>
<line x1="489.70" y1="240.80" x2="489.70" y2="244.60" stroke="#6a6a6a" stroke-width="0.8"/>
<text x="489.70" y="563.84" font-size="4.0" fill="#333" stroke="#333" stroke-width="0.08" font-weight="normal" text-anchor="middle">22,00h</text>
<line x1="532.20" y1="558.20" x2="532.20" y2="554.40" stroke="#5a5a5a" stroke-width="0.8"/>
<line x1="532.20" y1="240.80" x2="532.20" y2="244.60" stroke="#6a6a6a" stroke-width="0.8"/>
<text x="532.20" y="563.84" font-size="4.0" fill="#333" stroke="#333" stroke-width="0.08" font-weight="normal" text-anchor="middle">22,12h</text>
<line x1="574.70" y1="558.20" x2="574.70" y2="554.40" stroke="#5a5a5a" stroke-width="0.8"/>
<line x1="574.70" y1="240.80" x2="574.70" y2="244.60" stroke="#6a6a6a" stroke-width="0.8"/>
<text x="574.70" y="563.84" font-size="4.0" fill="#333" stroke="#333" stroke-width="0.08" font-weight="normal" text-anchor="middle">23,00h</text>
<line x1="617.20" y1="558.20" x2="617.20" y2="554.40" stroke="#5a5a5a" stroke-width="0.8"/>
<line x1="617.20" y1="240.80" x2="617.20" y2="244.60" stroke="#6a6a6a" stroke-width="0.8"/>
<text x="617.20" y="563.84" font-size="4.0" fill="#333" stroke="#333" stroke-width="0.08" font-weight="normal" text-anchor="middle">23,12h</text>
<line x1="659.70" y1="558.20" x2="659.70" y2="554.40" stroke="#5a5a5a" stroke-width="0.8"/>
<line x1="659.70" y1="240.80" x2="659.70" y2="244.60" stroke="#6a6a6a" stroke-width="0.8"/>
<text x="659.70" y="563.84" font-size="4.0" fill="#333" stroke="#333" stroke-width="0.08" font-weight="normal" text-anchor="middle">24,00h</text>
<line x1="702.20" y1="558.20" x2="702.20" y2="554.40" stroke="#5a5a5a" stroke-width="0.8"/>
<line x1="702.20" y1="240.80" x2="702.20" y2="244.60" stroke="#6a6a6a" stroke-width="0.8"/>
<text x="702.20" y="563.84" font-size="4.0" fill="#333" stroke="#333" stroke-width="0.08" font-weight="normal" text-anchor="middle">24,12h</text>
<line x1="744.70" y1="558.20" x2="744.70" y2="554.40" stroke="#5a5a5a" stroke-width="0.8"/>
<line x1="744.70" y1="240.80" x2="744.70" y2="244.60" stroke="#6a6a6a" stroke-width="0.8"/>
<text x="744.70" y="563.84" font-size="4.0" fill="#333" stroke="#333" stroke-width="0.08" font-weight="normal" text-anchor="middle">25,00h</text>
<line x1="787.20" y1="558.20" x2="787.20" y2="554.40" stroke="#5a5a5a" stroke-width="0.8"/>
<line x1="787.20" y1="240.80" x2="787.20" y2="244.60" stroke="#6a6a6a" stroke-width="0.8"/>
<text x="787.20" y="563.84" font-size="4.0" fill="#333" stroke="#333" stroke-width="0.08" font-weight="normal" text-anchor="middle">25,12h</text>
<line x1="829.70" y1="558.20" x2="829.70" y2="554.40" stroke="#5a5a5a" stroke-width="0.8"/>
<line x1="829.70" y1="240.80" x2="829.70" y2="244.60" stroke="#6a6a6a" stroke-width="0.8"/>
<text x="829.70" y="563.84" font-size="4.0" fill="#333" stroke="#333" stroke-width="0.08" font-weight="normal" text-anchor="middle">26,00h</text>
<text x="608.50" y="569.59" font-size="4.7" fill="#222" stroke="#222" stroke-width="0.08" font-weight="normal" text-anchor="middle">2010 Oct (day,hour)</text>
<text x="608.60" y="239.09" font-size="4.7" fill="#111" stroke="#111" stroke-width="0.1" font-weight="bold" text-anchor="middle">Time Series</text>
<text x="0" y="0" font-size="4.7" fill="#333" text-anchor="middle" transform="translate(366.6,399.5) rotate(-90)">Wind speed</text>
<line x1="786.80" y1="249.20" x2="802.30" y2="249.20" stroke="#ec8fb8" stroke-width="0.6"/>
<text x="803.60" y="251.27" font-size="5.2" fill="#2a2a2a" stroke="#2a2a2a" stroke-width="0.08" font-weight="normal" text-anchor="start" textLength="32.61" lengthAdjust="spacingAndGlyphs">Wspd_85 Avg</text>
<line x1="786.80" y1="256.10" x2="802.30" y2="256.10" stroke="#d49a78" stroke-width="0.6"/>
<text x="803.60" y="258.17" font-size="5.2" fill="#2a2a2a" stroke="#2a2a2a" stroke-width="0.08" font-weight="normal" text-anchor="start" textLength="31.82" lengthAdjust="spacingAndGlyphs">Wspd_85 Std</text>
<line x1="786.80" y1="263.00" x2="802.30" y2="263.00" stroke="#f6b3d3" stroke-width="0.6"/>
<text x="803.60" y="265.07" font-size="5.2" fill="#2a2a2a" stroke="#2a2a2a" stroke-width="0.08" font-weight="normal" text-anchor="start" textLength="33.87" lengthAdjust="spacingAndGlyphs">Wspd_85 Max</text>
<rect x="434.00" y="583.80" width="596.00" height="10.00" fill="#b4b4b4"/>
<rect x="347.40" y="584.30" width="31.00" height="7.40" fill="#f7f7f7" stroke="#c0c0c0" stroke-width="0.6"/>
<text x="362.90" y="589.82" font-size="4.7725" fill="#1c1c2c" stroke="#1c1c2c" stroke-width="0.08" font-weight="normal" text-anchor="middle" textLength="18.91" lengthAdjust="spacingAndGlyphs">Properties</text>
<rect x="378.40" y="581.50" width="28.00" height="11.60" fill="#f0f0f0"/>
<text x="392.40" y="590.86" font-size="4.6" fill="#1c1c2c" stroke="#1c1c2c" stroke-width="0.08" font-weight="normal" text-anchor="middle" textLength="14.01" lengthAdjust="spacingAndGlyphs">Graphic</text>
<rect x="407.00" y="584.30" width="27.00" height="7.40" fill="#f7f7f7" stroke="#c0c0c0" stroke-width="0.6"/>
<text x="420.50" y="589.76" font-size="4.6" fill="#1c1c2c" stroke="#1c1c2c" stroke-width="0.08" font-weight="normal" text-anchor="middle" textLength="7.78" lengthAdjust="spacingAndGlyphs">Map</text>
<rect x="886.00" y="214.50" width="3.30" height="369.00" fill="#a6a6a6"/>
<rect x="886.00" y="214.50" width="1.00" height="369.00" fill="#cfcfcf"/>
<rect x="889.30" y="204.70" width="138.00" height="379.00" fill="#f0f0f0"/>
<rect x="889.80" y="214.50" width="134.80" height="366.90" fill="#f0f0f0" stroke="#d8d8d8" stroke-width="0.7"/>
<rect x="1027.30" y="202.10" width="2.70" height="392.90" fill="#acacac"/>
<rect x="264.30" y="593.70" width="765.70" height="1.30" fill="#6b7e84"/>
<path d="M921.20,219.60 L1021.60,219.60 L1021.60,266.00 L891.60,266.00 L891.60,219.60 L892.90,219.60" fill="none" stroke="#96c878" stroke-width="0.9"/>
<text x="893.70" y="221.50" font-size="4.73" fill="#1a1a1a" stroke="#1a1a1a" stroke-width="0.1" font-weight="bold" text-anchor="start" textLength="24.84" lengthAdjust="spacingAndGlyphs">Plot options</text>
<text x="896.00" y="229.52" font-size="4.51" fill="#2a2a36" stroke="#2a2a36" stroke-width="0.08" font-weight="normal" text-anchor="start" textLength="18.46" lengthAdjust="spacingAndGlyphs">Plot Mode</text>
<rect x="931.40" y="223.90" width="86.20" height="7.50" fill="#ffffff" stroke="#d6d6d6" stroke-width="0.6"/>
<text x="932.60" y="229.27" font-size="4.51" fill="#1c1c2c" stroke="#1c1c2c" stroke-width="0.08" font-weight="normal" text-anchor="start" textLength="7.75" lengthAdjust="spacingAndGlyphs">Line</text>
<path d="M1012.60,226.85 L1014.10,228.35 L1015.60,226.85" fill="none" stroke="#777" stroke-width="0.55"/>
<text x="896.00" y="239.92" font-size="4.51" fill="#b4b4b4" stroke="#b4b4b4" stroke-width="0.08" font-weight="normal" text-anchor="start" textLength="24.91" lengthAdjust="spacingAndGlyphs">Transparency</text>
<rect x="931.40" y="233.60" width="86.60" height="8.50" fill="#ffffff" stroke="#cfcfcf" stroke-width="0.5"/>
<rect x="931.70" y="233.90" width="4.80" height="7.90" fill="#f0f0f0"/>
<rect x="1012.90" y="233.90" width="4.80" height="7.90" fill="#f0f0f0"/>
<rect x="936.00" y="233.90" width="0.50" height="7.90" fill="#e8e8e8"/>
<path d="M933.10,237.85 L934.30,236.75 L934.30,238.95Z" fill="#333"/>
<path d="M1016.30,237.85 L1015.10,236.75 L1015.10,238.95Z" fill="#333"/>
<line x1="936.50" y1="234.20" x2="936.50" y2="241.80" stroke="#6a6a6a" stroke-width="0.55"/>
<line x1="936.50" y1="234.20" x2="936.50" y2="241.80" stroke="#6a6a6a" stroke-width="0.55"/>
<line x1="1012.90" y1="234.20" x2="1012.90" y2="241.80" stroke="#9a9a9a" stroke-width="0.45"/>
<line x1="1017.80" y1="234.20" x2="1017.80" y2="242.10" stroke="#6a6a6a" stroke-width="0.55"/>
<line x1="931.40" y1="241.90" x2="1018.00" y2="241.90" stroke="#9a9a9a" stroke-width="0.5"/>
<rect x="896.10" y="245.60" width="5.00" height="5.00" fill="#1264c8" rx="0.8"/>
<path d="M897.35,248.20 L898.25,249.10 L899.90,247.10" stroke="#fff" stroke-width="0.6" fill="none"/>
<text x="902.50" y="249.72" font-size="4.51" fill="#2a2a36" stroke="#2a2a36" stroke-width="0.08" font-weight="normal" text-anchor="start" textLength="36.46" lengthAdjust="spacingAndGlyphs">Smooth with splines</text>
<rect x="960.00" y="245.60" width="5.00" height="5.00" fill="#1264c8" rx="0.8"/>
<path d="M961.25,248.20 L962.15,249.10 L963.80,247.10" stroke="#fff" stroke-width="0.6" fill="none"/>
<text x="966.40" y="249.72" font-size="4.51" fill="#2a2a36" stroke="#2a2a36" stroke-width="0.08" font-weight="normal" text-anchor="start" textLength="23.71" lengthAdjust="spacingAndGlyphs">Show legend</text>
<rect x="896.10" y="255.40" width="5.00" height="5.00" fill="#1264c8" rx="0.8"/>
<path d="M897.35,258.00 L898.25,258.90 L899.90,256.90" stroke="#fff" stroke-width="0.6" fill="none"/>
<text x="902.50" y="259.52" font-size="4.51" fill="#2a2a36" stroke="#2a2a36" stroke-width="0.08" font-weight="normal" text-anchor="start" textLength="18.23" lengthAdjust="spacingAndGlyphs">Show grid</text>
<rect x="960.00" y="255.40" width="5.00" height="5.00" fill="#1264c8" rx="0.8"/>
<path d="M961.25,258.00 L962.15,258.90 L963.80,256.90" stroke="#fff" stroke-width="0.6" fill="none"/>
<text x="966.40" y="259.52" font-size="4.51" fill="#2a2a36" stroke="#2a2a36" stroke-width="0.08" font-weight="normal" text-anchor="start" textLength="30.30" lengthAdjust="spacingAndGlyphs">Show flag marks</text>
<path d="M928.70,271.70 L1021.60,271.70 L1021.60,327.80 L891.60,327.80 L891.60,271.70 L892.90,271.70" fill="none" stroke="#96c878" stroke-width="0.9"/>
<text x="893.70" y="273.60" font-size="4.73" fill="#1a1a1a" stroke="#1a1a1a" stroke-width="0.1" font-weight="bold" text-anchor="start" textLength="34.40" lengthAdjust="spacingAndGlyphs">Graphic controls</text>
<text x="896.00" y="281.62" font-size="4.51" fill="#2a2a36" stroke="#2a2a36" stroke-width="0.08" font-weight="normal" text-anchor="start" textLength="17.85" lengthAdjust="spacingAndGlyphs">Time step</text>
<rect x="931.90" y="275.70" width="34.80" height="8.20" fill="#ffffff" stroke="#cfcfcf" stroke-width="0.5"/>
<rect x="932.20" y="276.00" width="4.80" height="7.60" fill="#f0f0f0"/>
<rect x="961.60" y="276.00" width="4.80" height="7.60" fill="#f0f0f0"/>
<rect x="937.00" y="276.00" width="1.60" height="7.60" fill="#e8e8e8"/>
<path d="M933.60,279.80 L934.80,278.70 L934.80,280.90Z" fill="#333"/>
<path d="M965.00,279.80 L963.80,278.70 L963.80,280.90Z" fill="#333"/>
<line x1="937.00" y1="276.30" x2="937.00" y2="283.60" stroke="#6a6a6a" stroke-width="0.55"/>
<line x1="938.60" y1="276.30" x2="938.60" y2="283.60" stroke="#6a6a6a" stroke-width="0.55"/>
<line x1="961.60" y1="276.30" x2="961.60" y2="283.60" stroke="#9a9a9a" stroke-width="0.45"/>
<line x1="966.50" y1="276.30" x2="966.50" y2="283.90" stroke="#6a6a6a" stroke-width="0.55"/>
<line x1="931.90" y1="283.70" x2="966.70" y2="283.70" stroke="#9a9a9a" stroke-width="0.5"/>
<rect x="971.10" y="276.10" width="46.80" height="7.80" fill="#ffffff" stroke="#d0d0d0" stroke-width="0.6"/>
<text x="994.50" y="281.62" font-size="4.51" fill="#1c1c2c" stroke="#1c1c2c" stroke-width="0.08" font-weight="normal" text-anchor="middle" textLength="7.98" lengthAdjust="spacingAndGlyphs">10m</text>
<rect x="896.00" y="285.70" width="71.60" height="7.90" fill="#f4f4f4" stroke="#d6d6d6" stroke-width="0.6"/>
<text x="897.20" y="291.27" font-size="4.51" fill="#a8a8a8" stroke="#a8a8a8" stroke-width="0.08" font-weight="normal" text-anchor="start" textLength="25.83" lengthAdjust="spacingAndGlyphs">Year Divisions</text>
<path d="M962.60,288.85 L964.10,290.35 L965.60,288.85" fill="none" stroke="#777" stroke-width="0.55"/>
<rect x="971.10" y="286.00" width="46.80" height="7.60" fill="#f4f4f4" stroke="#d0d0d0" stroke-width="0.6"/>
<text x="1011.40" y="291.42" font-size="4.51" fill="#a0a0a0" stroke="#a0a0a0" stroke-width="0.08" font-weight="normal" text-anchor="end" textLength="2.28" lengthAdjust="spacingAndGlyphs">1</text>
<rect x="1013.30" y="286.40" width="4.20" height="6.80" fill="#f0f0f0"/>
<path d="M1013.30,289.20 L1014.40,287.60 L1015.50,289.20Z M1013.30,290.40 L1014.40,292.00 L1015.50,290.40Z" fill="#222"/>
<rect x="896.40" y="307.70" width="4.40" height="4.40" fill="#ffffff" stroke="#555" stroke-width="0.6"/>
<text x="902.50" y="311.52" font-size="4.51" fill="#2a2a36" stroke="#2a2a36" stroke-width="0.08" font-weight="normal" text-anchor="start" textLength="38.06" lengthAdjust="spacingAndGlyphs">Only concurrent data</text>
<rect x="960.30" y="307.70" width="4.40" height="4.40" fill="#ffffff" stroke="#555" stroke-width="0.6"/>
<text x="966.40" y="311.52" font-size="4.51" fill="#2a2a36" stroke="#2a2a36" stroke-width="0.08" font-weight="normal" text-anchor="start" textLength="38.52" lengthAdjust="spacingAndGlyphs">Conventional months</text>
<rect x="896.40" y="317.80" width="4.40" height="4.40" fill="#f8f8f8" stroke="#d8d8d8" stroke-width="0.6"/>
<text x="902.50" y="321.62" font-size="4.51" fill="#a9a9a9" stroke="#a9a9a9" stroke-width="0.08" font-weight="normal" text-anchor="start" textLength="30.54" lengthAdjust="spacingAndGlyphs">Merge all graphs</text>
<path d="M929.20,333.40 L1021.60,333.40 L1021.60,576.70 L891.60,576.70 L891.60,333.40 L892.90,333.40" fill="none" stroke="#96c878" stroke-width="0.9"/>
<text x="893.70" y="335.30" font-size="4.73" fill="#1a1a1a" stroke="#1a1a1a" stroke-width="0.1" font-weight="bold" text-anchor="start" textLength="32.97" lengthAdjust="spacingAndGlyphs">Flags and filters</text>
<rect x="896.00" y="338.20" width="121.80" height="234.40" fill="#efefef" stroke="#c8c8c8" stroke-width="0.6"/>
<rect x="896.50" y="338.70" width="96.50" height="19.30" fill="#ffffff"/>
<rect x="896.50" y="338.70" width="5.00" height="19.30" fill="#f2f2f2"/>
<line x1="901.50" y1="338.70" x2="901.50" y2="358.00" stroke="#d0d0d0" stroke-width="0.5"/>
<line x1="941.60" y1="338.70" x2="941.60" y2="358.00" stroke="#d0d0d0" stroke-width="0.5"/>
<line x1="967.00" y1="338.70" x2="967.00" y2="358.00" stroke="#d0d0d0" stroke-width="0.5"/>
<line x1="993.00" y1="338.70" x2="993.00" y2="358.00" stroke="#d0d0d0" stroke-width="0.5"/>
<line x1="896.50" y1="349.00" x2="993.00" y2="349.00" stroke="#e0e0e0" stroke-width="0.5"/>
<line x1="896.50" y1="358.00" x2="993.00" y2="358.00" stroke="#d0d0d0" stroke-width="0.5"/>
<text x="903.50" y="345.76" font-size="4.9" fill="#1c1c2c" stroke="#1c1c2c" stroke-width="0.08" font-weight="normal" text-anchor="start" textLength="16.76" lengthAdjust="spacingAndGlyphs">Channel</text>
<text x="944.00" y="345.76" font-size="4.9" fill="#1c1c2c" stroke="#1c1c2c" stroke-width="0.08" font-weight="normal" text-anchor="start" textLength="7.25" lengthAdjust="spacingAndGlyphs">Min</text>
<text x="969.50" y="345.76" font-size="4.9" fill="#1c1c2c" stroke="#1c1c2c" stroke-width="0.08" font-weight="normal" text-anchor="start" textLength="8.50" lengthAdjust="spacingAndGlyphs">Max</text>
<rect x="897.20" y="349.60" width="3.00" height="2.80" fill="none" stroke="#999" stroke-width="0.4"/>
</g>
</svg></body></html>
